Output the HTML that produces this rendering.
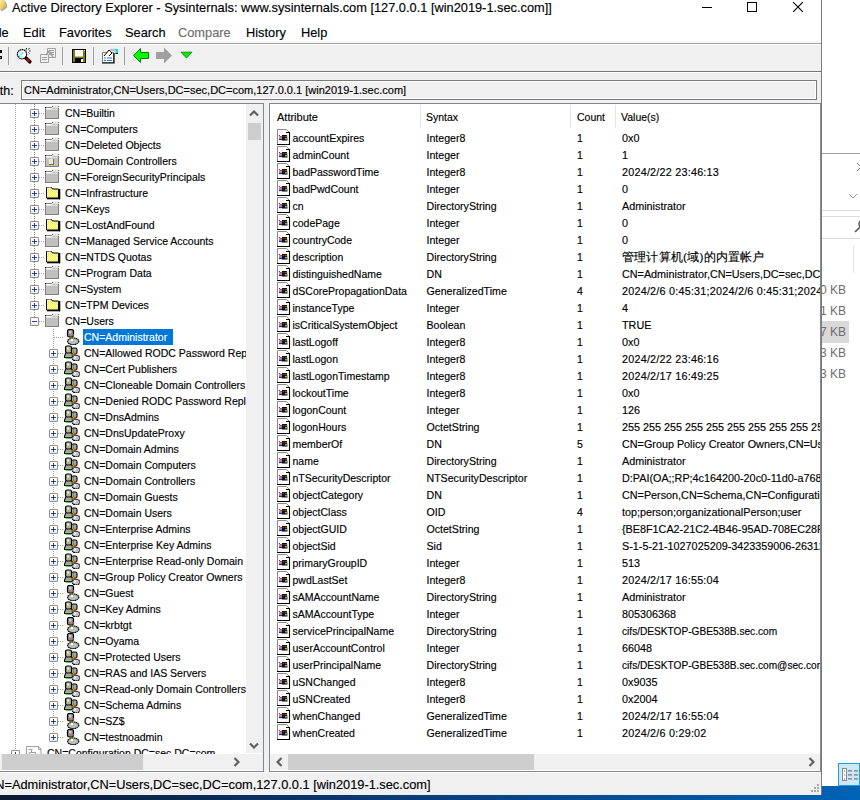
<!DOCTYPE html><html><head><meta charset="utf-8"><style>
*{box-sizing:border-box}
html,body{margin:0;padding:0}
body{width:860px;height:800px;overflow:hidden;position:relative;background:#fff;font-family:"Liberation Sans",sans-serif;color:#000}
.a{position:absolute}
.t{position:absolute;white-space:pre;font-size:11px;line-height:16px;-webkit-text-stroke-width:0.15px}
.s5{font-size:10.5px}
.s1{font-size:10.15px}
.s6{font-size:10.6px}
.s8{font-size:10.8px}
.dt{letter-spacing:0.22px}
.ic{position:absolute}
.eb{position:absolute;width:9px;height:9px;border:1px solid #8f8f8f;border-radius:1px;background:linear-gradient(#fff,#fff 50%,#e6e6e6)}
.ebh{position:absolute;left:1px;top:3px;width:5px;height:1px;background:#21449a}
.ebv{position:absolute;left:3px;top:1px;width:1px;height:5px;background:#21449a}
.dv{position:absolute;width:1px;background:repeating-linear-gradient(#a0a0a0 0 1px,transparent 1px 2px)}
.dh{position:absolute;height:1px;background:repeating-linear-gradient(90deg,#a0a0a0 0 1px,transparent 1px 2px)}
.sep{position:absolute;width:1px;background:#a0a0a0}
</style></head><body>
<div class="a" style="left:0;top:786px;width:860px;height:14px;background:linear-gradient(90deg,#0a1a34 0%,#0a3a78 45%,#0063b6 100%)"></div>
<div class="a" style="left:821px;top:0;width:39px;height:786px;background:#fff"></div>
<div class="a" style="left:821px;top:153px;width:39px;height:1px;background:#a0a0a0"></div>
<div class="a" style="left:821px;top:210px;width:39px;height:1px;background:#d9d9d9"></div>
<div class="a" style="left:821px;top:216px;width:39px;height:1px;background:#d9d9d9"></div>
<div class="a" style="left:821px;top:238px;width:39px;height:1px;background:#d9d9d9"></div>
<svg class="a" style="left:821px;top:150px" width="39" height="100" viewBox="0 0 39 100"><path d="M36 13 l4 4 M36 21 l4 -4" stroke="#777" stroke-width="1"/><path d="M28 44 l4 4 l4 -4" stroke="#999" fill="none" stroke-width="1"/><circle cx="42" cy="74" r="4" stroke="#555" fill="none" stroke-width="1.5"/><path d="M39 77 l-5 5" stroke="#555" stroke-width="1.6"/></svg>
<div class="a" style="left:853px;top:246px;width:1px;height:27px;background:#e5e5e5"></div>
<div class="a" style="left:821px;top:321px;width:28px;height:22px;background:#d9d9d9"></div>
<div class="t" style="left:820px;top:282px;font-size:12px;color:#6d6d6d;-webkit-text-stroke-width:0">0 KB</div>
<div class="t" style="left:820px;top:303px;font-size:12px;color:#6d6d6d;-webkit-text-stroke-width:0">1 KB</div>
<div class="t" style="left:820px;top:324px;font-size:12px;color:#6d6d6d;-webkit-text-stroke-width:0">7 KB</div>
<div class="t" style="left:820px;top:345px;font-size:12px;color:#6d6d6d;-webkit-text-stroke-width:0">3 KB</div>
<div class="t" style="left:820px;top:366px;font-size:12px;color:#6d6d6d;-webkit-text-stroke-width:0">3 KB</div>
<div class="a" style="left:838px;top:763px;width:22px;height:23px;background:#cce8f7;border:1.5px solid #1e9ee0"></div>
<svg class="a" style="left:838px;top:763px" width="22" height="23" viewBox="0 0 22 23"><rect x="4.5" y="5.5" width="4" height="12" fill="#fff" stroke="#888" stroke-width="1"/><rect x="6" y="7.5" width="1" height="1" fill="#486"/><rect x="6" y="11.5" width="1" height="1" fill="#48f"/><rect x="6" y="15.5" width="1" height="1" fill="#e22"/><path d="M10 7.8h4M16 7.8h4M10 11.8h4M16 11.8h4M10 15.8h4M16 15.8h4" stroke="#777" stroke-width="1.2"/></svg>
<div class="a" style="left:0;top:0;width:822px;height:795px;background:#f0f0f0;border-right:1px solid #7a7a7a"></div>
<div class="a" style="left:0;top:0;width:821px;height:43px;background:#fff"></div>
<div class="a" style="left:0;top:41px;width:821px;height:2px;background:#f7f7f7"></div>
<div class="a" style="left:0;top:43px;width:821px;height:1px;background:#a0a0a0"></div>
<div class="a" style="left:0;top:44px;width:821px;height:1px;background:#fff"></div>
<svg class="a" style="left:0;top:0" width="10" height="12" viewBox="0 0 10 12"><defs><linearGradient id="tg" x1="0" y1="0" x2="1" y2="1"><stop offset="0" stop-color="#fff2a8"/><stop offset="1" stop-color="#d9a62a"/></linearGradient></defs><path d="M0 10.5L3 9.5L6.5 6.5L6 3L4 0H0z" fill="#555" opacity="0.5" transform="translate(0.8,0.8)"/><path d="M0 10L2.5 9L6 6L5.5 3L3.5 0H0z" fill="url(#tg)"/></svg>
<div class="t" style="left:12px;top:-1px;font-size:12.8px;line-height:18px">Active Directory Explorer - Sysinternals: www.sysinternals.com [127.0.0.1 [win2019-1.sec.com]]</div>
<div class="a" style="left:702px;top:7px;width:10px;height:1px;background:#000"></div>
<div class="a" style="left:747px;top:2px;width:10px;height:10px;border:1px solid #000"></div>
<svg class="a" style="left:793px;top:2px" width="10" height="10" viewBox="0 0 10 10"><path d="M0 0L10 10M10 0L0 10" stroke="#000" stroke-width="1.1"/></svg>
<div class="t" style="left:-12px;top:24px;font-size:12.8px;line-height:18px;color:#000">File</div>
<div class="t" style="left:23px;top:24px;font-size:12.8px;line-height:18px;color:#000">Edit</div>
<div class="t" style="left:59px;top:24px;font-size:12.8px;line-height:18px;color:#000">Favorites</div>
<div class="t" style="left:125px;top:24px;font-size:12.8px;line-height:18px;color:#000">Search</div>
<div class="t" style="left:178px;top:24px;font-size:12.8px;line-height:18px;color:#6d6d6d">Compare</div>
<div class="t" style="left:246px;top:24px;font-size:12.8px;line-height:18px;color:#000">History</div>
<div class="t" style="left:301px;top:24px;font-size:12.8px;line-height:18px;color:#000">Help</div>
<div class="a" style="left:0;top:71px;width:821px;height:1px;background:#767676"></div>
<div class="a" style="left:0;top:72px;width:821px;height:1px;background:#fff"></div>
<div class="sep" style="left:8px;top:47px;height:18px"></div>
<div class="sep" style="left:62px;top:47px;height:18px"></div>
<div class="sep" style="left:93px;top:47px;height:18px"></div>
<div class="sep" style="left:124px;top:47px;height:18px"></div>
<div class="a" style="left:0;top:50px;width:2px;height:3px;background:#000"></div><div class="a" style="left:0;top:56px;width:2px;height:3px;background:#000"></div><div class="a" style="left:0;top:57px;width:1px;height:1px;background:#aa0"></div>
<svg class="a" style="left:0;top:44px" width="200" height="24" viewBox="0 44 200 24"><circle cx="22" cy="54.2" r="4.6" fill="#fff" stroke="#000" stroke-width="1.2" stroke-dasharray="1.6 0.5"/><path d="M19 56.5l1-1M20.5 55l1-1M22 53.5l1-1M19.5 53l1 0M21 57l1 0" stroke="#00e0ff" stroke-width="1.2"/><path d="M26.2 58.2l3.6 3.6" stroke="#000" stroke-width="3.6" stroke-linecap="round"/><path d="M26.6 58.6l3 3" stroke="#e00000" stroke-width="2"/><path d="M26.5 48v1.5M29.5 48l-1 1.5M30.5 51h-1.5M29.5 53.5l-1-1M25 49.5l1 1" stroke="#000" stroke-width="0.9"/><path d="M47.5 48.5h8v9h-8z" fill="#f0f0f0" stroke="#a0a0a0"/><path d="M49 50.5h5M49 52.5h5M49 54.5h5" stroke="#a0a0a0"/><path d="M40.5 54.5h8v8h-8z" fill="#f0f0f0" stroke="#a0a0a0"/><path d="M42 57.5h5M42 59.5h5" stroke="#a0a0a0"/><path d="M46 55l3-4l3 3M49 52l4 5" stroke="#a0a0a0" stroke-width="1.4" fill="none"/><rect x="72" y="49" width="14" height="14" fill="#000"/><rect x="73" y="50" width="12" height="12" fill="#808000"/><rect x="75" y="50" width="8" height="6.5" fill="#fff"/><rect x="75" y="58" width="8" height="4" fill="#000"/><rect x="81" y="59" width="2" height="3" fill="#fff"/><rect x="84" y="50" width="1" height="1" fill="#fff"/><path d="M102.5 52.5h11v10h-11z" fill="#fff" stroke="#808080"/><path d="M114 53v10h-12" stroke="#000" fill="none" stroke-width="1.2"/><path d="M104 58h2M107 58h5M104 60.5h2M107 60.5h5" stroke="#1e6fe0" stroke-width="1.2"/><path d="M104 56l5-6l3 3l-3 3" stroke="#000" fill="#fffde0" stroke-width="1"/><path d="M110 50h6" stroke="#c0c0c0" stroke-width="2.5"/><rect x="115.5" y="49" width="2.5" height="5" fill="#00e0ff"/><rect x="115.5" y="53" width="2.5" height="1" fill="#000"/><path d="M133.5 55.5L140.5 48.5V52.5H148.5V58.5H140.5V62.5z" fill="#00ff00" stroke="#008000" stroke-width="1"/><path d="M172 55.5L164 47.5V52H156V59H164V63.5z" fill="#a0a0a0"/><path d="M181 52.2H192L186.5 58z" fill="#00f000" stroke="#008000" stroke-width="0.8"/></svg>
<div class="t" style="left:-15.5px;top:82px;font-size:12.5px;line-height:18px">Path:</div>
<div class="a" style="left:21px;top:80px;width:796px;height:20px;border:1px solid #7a7a7a;background:#f0f0f0;box-shadow:inset 0 0 0 1px #fff"></div>
<div class="t" style="left:24px;top:82px;line-height:16px">CN=Administrator,CN=Users,DC=sec,DC=com,127.0.0.1 [win2019-1.sec.com]</div>
<div class="a" style="left:-2px;top:103px;width:266px;height:669px;border:1px solid #828790;background:#fff;overflow:hidden">
<div class="dv" style="left:16px;top:0px;height:660px"></div>
<div class="dv" style="left:35px;top:0px;height:217px"></div>
<div class="dv" style="left:54px;top:225px;height:408px"></div>
<div class="eb" style="left:31px;top:5px"><div class="ebh"></div><div class="ebv"></div></div>
<div class="dh" style="left:40px;top:9px;width:6px"></div>
<svg class="ic" style="left:46px;top:1px" width="16" height="16" viewBox="0 0 16 16"><rect x="0.5" y="2.5" width="13" height="11" fill="#c0c0c0" stroke="#808080"/><rect x="1" y="3" width="6" height="1" fill="#fff"/><rect x="1" y="4" width="12" height="1" fill="#e0e0e0"/><rect x="7" y="0.5" width="7" height="2.5" fill="#e8e8e8"/><rect x="7" y="1" width="1" height="1" fill="#808000"/><rect x="13" y="1" width="1" height="1" fill="#808000"/><rect x="0" y="2" width="1" height="1" fill="#000"/></svg>
<div class="t s5" style="left:66px;top:1px">CN=Builtin</div>
<div class="eb" style="left:31px;top:21px"><div class="ebh"></div><div class="ebv"></div></div>
<div class="dh" style="left:40px;top:25px;width:6px"></div>
<svg class="ic" style="left:46px;top:17px" width="16" height="16" viewBox="0 0 16 16"><rect x="0.5" y="2.5" width="13" height="11" fill="#c0c0c0" stroke="#808080"/><rect x="1" y="3" width="6" height="1" fill="#fff"/><rect x="1" y="4" width="12" height="1" fill="#e0e0e0"/><rect x="7" y="0.5" width="7" height="2.5" fill="#e8e8e8"/><rect x="7" y="1" width="1" height="1" fill="#808000"/><rect x="13" y="1" width="1" height="1" fill="#808000"/><rect x="0" y="2" width="1" height="1" fill="#000"/></svg>
<div class="t s5" style="left:66px;top:17px">CN=Computers</div>
<div class="eb" style="left:31px;top:37px"><div class="ebh"></div><div class="ebv"></div></div>
<div class="dh" style="left:40px;top:41px;width:6px"></div>
<svg class="ic" style="left:46px;top:33px" width="16" height="16" viewBox="0 0 16 16"><rect x="0.5" y="2.5" width="13" height="11" fill="#c0c0c0" stroke="#808080"/><rect x="1" y="3" width="6" height="1" fill="#fff"/><rect x="1" y="4" width="12" height="1" fill="#e0e0e0"/><rect x="7" y="0.5" width="7" height="2.5" fill="#e8e8e8"/><rect x="7" y="1" width="1" height="1" fill="#808000"/><rect x="13" y="1" width="1" height="1" fill="#808000"/><rect x="0" y="2" width="1" height="1" fill="#000"/></svg>
<div class="t s5" style="left:66px;top:33px">CN=Deleted Objects</div>
<div class="eb" style="left:31px;top:53px"><div class="ebh"></div><div class="ebv"></div></div>
<div class="dh" style="left:40px;top:57px;width:6px"></div>
<svg class="ic" style="left:46px;top:49px" width="16" height="16" viewBox="0 0 16 16"><rect x="0.5" y="2.5" width="13" height="11" fill="#c0c0c0" stroke="#808080"/><rect x="1" y="3" width="6" height="1" fill="#fff"/><rect x="1" y="4" width="12" height="1" fill="#e0e0e0"/><rect x="7" y="0.5" width="7" height="2.5" fill="#e8e8e8"/><rect x="7" y="1" width="1" height="1" fill="#808000"/><rect x="13" y="1" width="1" height="1" fill="#808000"/><rect x="0" y="2" width="1" height="1" fill="#000"/><path d="M4 6h5v5h-5z" fill="#e8e8e8"/><path d="M9 6v6h-5v-1h4v-5z" fill="#808000"/></svg>
<div class="t s5" style="left:66px;top:49px">OU=Domain Controllers</div>
<div class="eb" style="left:31px;top:69px"><div class="ebh"></div><div class="ebv"></div></div>
<div class="dh" style="left:40px;top:73px;width:6px"></div>
<svg class="ic" style="left:46px;top:65px" width="16" height="16" viewBox="0 0 16 16"><rect x="0.5" y="2.5" width="13" height="11" fill="#c0c0c0" stroke="#808080"/><rect x="1" y="3" width="6" height="1" fill="#fff"/><rect x="1" y="4" width="12" height="1" fill="#e0e0e0"/><rect x="7" y="0.5" width="7" height="2.5" fill="#e8e8e8"/><rect x="7" y="1" width="1" height="1" fill="#808000"/><rect x="13" y="1" width="1" height="1" fill="#808000"/><rect x="0" y="2" width="1" height="1" fill="#000"/></svg>
<div class="t s5" style="left:66px;top:65px">CN=ForeignSecurityPrincipals</div>
<div class="eb" style="left:31px;top:85px"><div class="ebh"></div><div class="ebv"></div></div>
<div class="dh" style="left:40px;top:89px;width:6px"></div>
<svg class="ic" style="left:46px;top:81px" width="16" height="16" viewBox="0 0 16 16"><defs><pattern id="dy" width="2" height="2" patternUnits="userSpaceOnUse"><rect width="2" height="2" fill="#f4f400"/><rect width="1" height="1" fill="#fff"/><rect x="1" y="1" width="1" height="1" fill="#fff"/></pattern></defs><rect x="2" y="13" width="13" height="1.3" fill="#000"/><rect x="14" y="4" width="1.3" height="10.3" fill="#000"/><path d="M1.5 2.5h5l1 1.5h6v9h-12z" fill="url(#dy)" stroke="#000" stroke-width="1"/><path d="M2 3h4" stroke="#fff" stroke-width="1"/></svg>
<div class="t s5" style="left:66px;top:81px">CN=Infrastructure</div>
<div class="eb" style="left:31px;top:101px"><div class="ebh"></div><div class="ebv"></div></div>
<div class="dh" style="left:40px;top:105px;width:6px"></div>
<svg class="ic" style="left:46px;top:97px" width="16" height="16" viewBox="0 0 16 16"><rect x="0.5" y="2.5" width="13" height="11" fill="#c0c0c0" stroke="#808080"/><rect x="1" y="3" width="6" height="1" fill="#fff"/><rect x="1" y="4" width="12" height="1" fill="#e0e0e0"/><rect x="7" y="0.5" width="7" height="2.5" fill="#e8e8e8"/><rect x="7" y="1" width="1" height="1" fill="#808000"/><rect x="13" y="1" width="1" height="1" fill="#808000"/><rect x="0" y="2" width="1" height="1" fill="#000"/></svg>
<div class="t s5" style="left:66px;top:97px">CN=Keys</div>
<div class="eb" style="left:31px;top:117px"><div class="ebh"></div><div class="ebv"></div></div>
<div class="dh" style="left:40px;top:121px;width:6px"></div>
<svg class="ic" style="left:46px;top:113px" width="16" height="16" viewBox="0 0 16 16"><defs><pattern id="dy" width="2" height="2" patternUnits="userSpaceOnUse"><rect width="2" height="2" fill="#f4f400"/><rect width="1" height="1" fill="#fff"/><rect x="1" y="1" width="1" height="1" fill="#fff"/></pattern></defs><rect x="2" y="13" width="13" height="1.3" fill="#000"/><rect x="14" y="4" width="1.3" height="10.3" fill="#000"/><path d="M1.5 2.5h5l1 1.5h6v9h-12z" fill="url(#dy)" stroke="#000" stroke-width="1"/><path d="M2 3h4" stroke="#fff" stroke-width="1"/></svg>
<div class="t s5" style="left:66px;top:113px">CN=LostAndFound</div>
<div class="eb" style="left:31px;top:133px"><div class="ebh"></div><div class="ebv"></div></div>
<div class="dh" style="left:40px;top:137px;width:6px"></div>
<svg class="ic" style="left:46px;top:129px" width="16" height="16" viewBox="0 0 16 16"><rect x="0.5" y="2.5" width="13" height="11" fill="#c0c0c0" stroke="#808080"/><rect x="1" y="3" width="6" height="1" fill="#fff"/><rect x="1" y="4" width="12" height="1" fill="#e0e0e0"/><rect x="7" y="0.5" width="7" height="2.5" fill="#e8e8e8"/><rect x="7" y="1" width="1" height="1" fill="#808000"/><rect x="13" y="1" width="1" height="1" fill="#808000"/><rect x="0" y="2" width="1" height="1" fill="#000"/></svg>
<div class="t s5" style="left:66px;top:129px">CN=Managed Service Accounts</div>
<div class="eb" style="left:31px;top:149px"><div class="ebh"></div><div class="ebv"></div></div>
<div class="dh" style="left:40px;top:153px;width:6px"></div>
<svg class="ic" style="left:46px;top:145px" width="16" height="16" viewBox="0 0 16 16"><defs><pattern id="dy" width="2" height="2" patternUnits="userSpaceOnUse"><rect width="2" height="2" fill="#f4f400"/><rect width="1" height="1" fill="#fff"/><rect x="1" y="1" width="1" height="1" fill="#fff"/></pattern></defs><rect x="2" y="13" width="13" height="1.3" fill="#000"/><rect x="14" y="4" width="1.3" height="10.3" fill="#000"/><path d="M1.5 2.5h5l1 1.5h6v9h-12z" fill="url(#dy)" stroke="#000" stroke-width="1"/><path d="M2 3h4" stroke="#fff" stroke-width="1"/></svg>
<div class="t s5" style="left:66px;top:145px">CN=NTDS Quotas</div>
<div class="eb" style="left:31px;top:165px"><div class="ebh"></div><div class="ebv"></div></div>
<div class="dh" style="left:40px;top:169px;width:6px"></div>
<svg class="ic" style="left:46px;top:161px" width="16" height="16" viewBox="0 0 16 16"><rect x="0.5" y="2.5" width="13" height="11" fill="#c0c0c0" stroke="#808080"/><rect x="1" y="3" width="6" height="1" fill="#fff"/><rect x="1" y="4" width="12" height="1" fill="#e0e0e0"/><rect x="7" y="0.5" width="7" height="2.5" fill="#e8e8e8"/><rect x="7" y="1" width="1" height="1" fill="#808000"/><rect x="13" y="1" width="1" height="1" fill="#808000"/><rect x="0" y="2" width="1" height="1" fill="#000"/></svg>
<div class="t s5" style="left:66px;top:161px">CN=Program Data</div>
<div class="eb" style="left:31px;top:181px"><div class="ebh"></div><div class="ebv"></div></div>
<div class="dh" style="left:40px;top:185px;width:6px"></div>
<svg class="ic" style="left:46px;top:177px" width="16" height="16" viewBox="0 0 16 16"><rect x="0.5" y="2.5" width="13" height="11" fill="#c0c0c0" stroke="#808080"/><rect x="1" y="3" width="6" height="1" fill="#fff"/><rect x="1" y="4" width="12" height="1" fill="#e0e0e0"/><rect x="7" y="0.5" width="7" height="2.5" fill="#e8e8e8"/><rect x="7" y="1" width="1" height="1" fill="#808000"/><rect x="13" y="1" width="1" height="1" fill="#808000"/><rect x="0" y="2" width="1" height="1" fill="#000"/></svg>
<div class="t s5" style="left:66px;top:177px">CN=System</div>
<div class="eb" style="left:31px;top:197px"><div class="ebh"></div><div class="ebv"></div></div>
<div class="dh" style="left:40px;top:201px;width:6px"></div>
<svg class="ic" style="left:46px;top:193px" width="16" height="16" viewBox="0 0 16 16"><defs><pattern id="dy" width="2" height="2" patternUnits="userSpaceOnUse"><rect width="2" height="2" fill="#f4f400"/><rect width="1" height="1" fill="#fff"/><rect x="1" y="1" width="1" height="1" fill="#fff"/></pattern></defs><rect x="2" y="13" width="13" height="1.3" fill="#000"/><rect x="14" y="4" width="1.3" height="10.3" fill="#000"/><path d="M1.5 2.5h5l1 1.5h6v9h-12z" fill="url(#dy)" stroke="#000" stroke-width="1"/><path d="M2 3h4" stroke="#fff" stroke-width="1"/></svg>
<div class="t s5" style="left:66px;top:193px">CN=TPM Devices</div>
<div class="eb" style="left:31px;top:213px"><div class="ebh"></div></div>
<div class="dh" style="left:40px;top:217px;width:6px"></div>
<svg class="ic" style="left:46px;top:209px" width="16" height="16" viewBox="0 0 16 16"><rect x="0.5" y="2.5" width="13" height="11" fill="#c0c0c0" stroke="#808080"/><rect x="1" y="3" width="6" height="1" fill="#fff"/><rect x="1" y="4" width="12" height="1" fill="#e0e0e0"/><rect x="7" y="0.5" width="7" height="2.5" fill="#e8e8e8"/><rect x="7" y="1" width="1" height="1" fill="#808000"/><rect x="13" y="1" width="1" height="1" fill="#808000"/><rect x="0" y="2" width="1" height="1" fill="#000"/></svg>
<div class="t s5" style="left:66px;top:209px">CN=Users</div>
<div class="dh" style="left:55px;top:233px;width:10px"></div>
<svg class="ic" style="left:65px;top:225px" width="16" height="16" viewBox="0 0 16 16"><ellipse cx="9.2" cy="12.3" rx="5.6" ry="3.3" fill="#c0c0c0" stroke="#000" stroke-width="1.2" stroke-dasharray="1.6 0.5"/><rect x="7" y="10" width="2" height="2" fill="#fff"/><path d="M13 14.5l1.5-1.5" stroke="#20a0c0" stroke-width="1"/><rect x="3.5" y="0.5" width="6" height="7.5" rx="1.8" fill="#8c8c8c" stroke="#000" stroke-width="1.2"/><rect x="5" y="2" width="2.5" height="2.5" fill="#c8c8c8"/><rect x="5" y="8" width="3" height="1.8" fill="#808000"/><rect x="9" y="5" width="1" height="2" fill="#c02020"/></svg>
<div class="a" style="left:84px;top:225px;width:90px;height:16px;background:#0078d7"></div>
<div class="t s5" style="left:85px;top:225px;color:#fff">CN=Administrator</div>
<div class="eb" style="left:50px;top:245px"><div class="ebh"></div><div class="ebv"></div></div>
<div class="dh" style="left:59px;top:249px;width:6px"></div>
<svg class="ic" style="left:65px;top:241px" width="16" height="16" viewBox="0 0 16 16"><path d="M0 12.5 L2 7.5 h6 l1 5z" fill="#a8a8a8" stroke="#000" stroke-width="1.1"/><rect x="1.5" y="1" width="6" height="7" rx="1.6" fill="#b0b0b0" stroke="#000" stroke-width="1.1"/><rect x="3" y="2.5" width="2" height="2" fill="#e8e8e8"/><rect x="2" y="2" width="1" height="5" fill="#909000"/><rect x="7.5" y="3" width="5.5" height="6" rx="1.5" fill="#a8a8a8" stroke="#000" stroke-width="1.1"/><rect x="9" y="4" width="1" height="5" fill="#909000"/><rect x="2" y="12.5" width="5" height="1.2" fill="#00a000"/><path d="M7 11 l3-2.5 l2 0" stroke="#909000" stroke-width="1.3" fill="none"/><path d="M10.5 9.5 l2-1.5" stroke="#d00000" stroke-width="1"/><ellipse cx="12" cy="13" rx="4" ry="2.8" fill="#c4c4c4" stroke="#000" stroke-width="1.1" stroke-dasharray="1.5 0.5"/><rect x="10" y="11.5" width="2" height="2" fill="#f4f4f4"/><path d="M8.5 14.5l1.5 1.3" stroke="#0000c0" stroke-width="1"/></svg>
<div class="t s5" style="left:85px;top:241px">CN=Allowed RODC Password Replication Group</div>
<div class="eb" style="left:50px;top:261px"><div class="ebh"></div><div class="ebv"></div></div>
<div class="dh" style="left:59px;top:265px;width:6px"></div>
<svg class="ic" style="left:65px;top:257px" width="16" height="16" viewBox="0 0 16 16"><path d="M0 12.5 L2 7.5 h6 l1 5z" fill="#a8a8a8" stroke="#000" stroke-width="1.1"/><rect x="1.5" y="1" width="6" height="7" rx="1.6" fill="#b0b0b0" stroke="#000" stroke-width="1.1"/><rect x="3" y="2.5" width="2" height="2" fill="#e8e8e8"/><rect x="2" y="2" width="1" height="5" fill="#909000"/><rect x="7.5" y="3" width="5.5" height="6" rx="1.5" fill="#a8a8a8" stroke="#000" stroke-width="1.1"/><rect x="9" y="4" width="1" height="5" fill="#909000"/><rect x="2" y="12.5" width="5" height="1.2" fill="#00a000"/><path d="M7 11 l3-2.5 l2 0" stroke="#909000" stroke-width="1.3" fill="none"/><path d="M10.5 9.5 l2-1.5" stroke="#d00000" stroke-width="1"/><ellipse cx="12" cy="13" rx="4" ry="2.8" fill="#c4c4c4" stroke="#000" stroke-width="1.1" stroke-dasharray="1.5 0.5"/><rect x="10" y="11.5" width="2" height="2" fill="#f4f4f4"/><path d="M8.5 14.5l1.5 1.3" stroke="#0000c0" stroke-width="1"/></svg>
<div class="t s5" style="left:85px;top:257px">CN=Cert Publishers</div>
<div class="eb" style="left:50px;top:277px"><div class="ebh"></div><div class="ebv"></div></div>
<div class="dh" style="left:59px;top:281px;width:6px"></div>
<svg class="ic" style="left:65px;top:273px" width="16" height="16" viewBox="0 0 16 16"><path d="M0 12.5 L2 7.5 h6 l1 5z" fill="#a8a8a8" stroke="#000" stroke-width="1.1"/><rect x="1.5" y="1" width="6" height="7" rx="1.6" fill="#b0b0b0" stroke="#000" stroke-width="1.1"/><rect x="3" y="2.5" width="2" height="2" fill="#e8e8e8"/><rect x="2" y="2" width="1" height="5" fill="#909000"/><rect x="7.5" y="3" width="5.5" height="6" rx="1.5" fill="#a8a8a8" stroke="#000" stroke-width="1.1"/><rect x="9" y="4" width="1" height="5" fill="#909000"/><rect x="2" y="12.5" width="5" height="1.2" fill="#00a000"/><path d="M7 11 l3-2.5 l2 0" stroke="#909000" stroke-width="1.3" fill="none"/><path d="M10.5 9.5 l2-1.5" stroke="#d00000" stroke-width="1"/><ellipse cx="12" cy="13" rx="4" ry="2.8" fill="#c4c4c4" stroke="#000" stroke-width="1.1" stroke-dasharray="1.5 0.5"/><rect x="10" y="11.5" width="2" height="2" fill="#f4f4f4"/><path d="M8.5 14.5l1.5 1.3" stroke="#0000c0" stroke-width="1"/></svg>
<div class="t s5" style="left:85px;top:273px">CN=Cloneable Domain Controllers</div>
<div class="eb" style="left:50px;top:293px"><div class="ebh"></div><div class="ebv"></div></div>
<div class="dh" style="left:59px;top:297px;width:6px"></div>
<svg class="ic" style="left:65px;top:289px" width="16" height="16" viewBox="0 0 16 16"><path d="M0 12.5 L2 7.5 h6 l1 5z" fill="#a8a8a8" stroke="#000" stroke-width="1.1"/><rect x="1.5" y="1" width="6" height="7" rx="1.6" fill="#b0b0b0" stroke="#000" stroke-width="1.1"/><rect x="3" y="2.5" width="2" height="2" fill="#e8e8e8"/><rect x="2" y="2" width="1" height="5" fill="#909000"/><rect x="7.5" y="3" width="5.5" height="6" rx="1.5" fill="#a8a8a8" stroke="#000" stroke-width="1.1"/><rect x="9" y="4" width="1" height="5" fill="#909000"/><rect x="2" y="12.5" width="5" height="1.2" fill="#00a000"/><path d="M7 11 l3-2.5 l2 0" stroke="#909000" stroke-width="1.3" fill="none"/><path d="M10.5 9.5 l2-1.5" stroke="#d00000" stroke-width="1"/><ellipse cx="12" cy="13" rx="4" ry="2.8" fill="#c4c4c4" stroke="#000" stroke-width="1.1" stroke-dasharray="1.5 0.5"/><rect x="10" y="11.5" width="2" height="2" fill="#f4f4f4"/><path d="M8.5 14.5l1.5 1.3" stroke="#0000c0" stroke-width="1"/></svg>
<div class="t s5" style="left:85px;top:289px">CN=Denied RODC Password Replication Group</div>
<div class="eb" style="left:50px;top:309px"><div class="ebh"></div><div class="ebv"></div></div>
<div class="dh" style="left:59px;top:313px;width:6px"></div>
<svg class="ic" style="left:65px;top:305px" width="16" height="16" viewBox="0 0 16 16"><path d="M0 12.5 L2 7.5 h6 l1 5z" fill="#a8a8a8" stroke="#000" stroke-width="1.1"/><rect x="1.5" y="1" width="6" height="7" rx="1.6" fill="#b0b0b0" stroke="#000" stroke-width="1.1"/><rect x="3" y="2.5" width="2" height="2" fill="#e8e8e8"/><rect x="2" y="2" width="1" height="5" fill="#909000"/><rect x="7.5" y="3" width="5.5" height="6" rx="1.5" fill="#a8a8a8" stroke="#000" stroke-width="1.1"/><rect x="9" y="4" width="1" height="5" fill="#909000"/><rect x="2" y="12.5" width="5" height="1.2" fill="#00a000"/><path d="M7 11 l3-2.5 l2 0" stroke="#909000" stroke-width="1.3" fill="none"/><path d="M10.5 9.5 l2-1.5" stroke="#d00000" stroke-width="1"/><ellipse cx="12" cy="13" rx="4" ry="2.8" fill="#c4c4c4" stroke="#000" stroke-width="1.1" stroke-dasharray="1.5 0.5"/><rect x="10" y="11.5" width="2" height="2" fill="#f4f4f4"/><path d="M8.5 14.5l1.5 1.3" stroke="#0000c0" stroke-width="1"/></svg>
<div class="t s5" style="left:85px;top:305px">CN=DnsAdmins</div>
<div class="eb" style="left:50px;top:325px"><div class="ebh"></div><div class="ebv"></div></div>
<div class="dh" style="left:59px;top:329px;width:6px"></div>
<svg class="ic" style="left:65px;top:321px" width="16" height="16" viewBox="0 0 16 16"><path d="M0 12.5 L2 7.5 h6 l1 5z" fill="#a8a8a8" stroke="#000" stroke-width="1.1"/><rect x="1.5" y="1" width="6" height="7" rx="1.6" fill="#b0b0b0" stroke="#000" stroke-width="1.1"/><rect x="3" y="2.5" width="2" height="2" fill="#e8e8e8"/><rect x="2" y="2" width="1" height="5" fill="#909000"/><rect x="7.5" y="3" width="5.5" height="6" rx="1.5" fill="#a8a8a8" stroke="#000" stroke-width="1.1"/><rect x="9" y="4" width="1" height="5" fill="#909000"/><rect x="2" y="12.5" width="5" height="1.2" fill="#00a000"/><path d="M7 11 l3-2.5 l2 0" stroke="#909000" stroke-width="1.3" fill="none"/><path d="M10.5 9.5 l2-1.5" stroke="#d00000" stroke-width="1"/><ellipse cx="12" cy="13" rx="4" ry="2.8" fill="#c4c4c4" stroke="#000" stroke-width="1.1" stroke-dasharray="1.5 0.5"/><rect x="10" y="11.5" width="2" height="2" fill="#f4f4f4"/><path d="M8.5 14.5l1.5 1.3" stroke="#0000c0" stroke-width="1"/></svg>
<div class="t s5" style="left:85px;top:321px">CN=DnsUpdateProxy</div>
<div class="eb" style="left:50px;top:341px"><div class="ebh"></div><div class="ebv"></div></div>
<div class="dh" style="left:59px;top:345px;width:6px"></div>
<svg class="ic" style="left:65px;top:337px" width="16" height="16" viewBox="0 0 16 16"><path d="M0 12.5 L2 7.5 h6 l1 5z" fill="#a8a8a8" stroke="#000" stroke-width="1.1"/><rect x="1.5" y="1" width="6" height="7" rx="1.6" fill="#b0b0b0" stroke="#000" stroke-width="1.1"/><rect x="3" y="2.5" width="2" height="2" fill="#e8e8e8"/><rect x="2" y="2" width="1" height="5" fill="#909000"/><rect x="7.5" y="3" width="5.5" height="6" rx="1.5" fill="#a8a8a8" stroke="#000" stroke-width="1.1"/><rect x="9" y="4" width="1" height="5" fill="#909000"/><rect x="2" y="12.5" width="5" height="1.2" fill="#00a000"/><path d="M7 11 l3-2.5 l2 0" stroke="#909000" stroke-width="1.3" fill="none"/><path d="M10.5 9.5 l2-1.5" stroke="#d00000" stroke-width="1"/><ellipse cx="12" cy="13" rx="4" ry="2.8" fill="#c4c4c4" stroke="#000" stroke-width="1.1" stroke-dasharray="1.5 0.5"/><rect x="10" y="11.5" width="2" height="2" fill="#f4f4f4"/><path d="M8.5 14.5l1.5 1.3" stroke="#0000c0" stroke-width="1"/></svg>
<div class="t s5" style="left:85px;top:337px">CN=Domain Admins</div>
<div class="eb" style="left:50px;top:357px"><div class="ebh"></div><div class="ebv"></div></div>
<div class="dh" style="left:59px;top:361px;width:6px"></div>
<svg class="ic" style="left:65px;top:353px" width="16" height="16" viewBox="0 0 16 16"><path d="M0 12.5 L2 7.5 h6 l1 5z" fill="#a8a8a8" stroke="#000" stroke-width="1.1"/><rect x="1.5" y="1" width="6" height="7" rx="1.6" fill="#b0b0b0" stroke="#000" stroke-width="1.1"/><rect x="3" y="2.5" width="2" height="2" fill="#e8e8e8"/><rect x="2" y="2" width="1" height="5" fill="#909000"/><rect x="7.5" y="3" width="5.5" height="6" rx="1.5" fill="#a8a8a8" stroke="#000" stroke-width="1.1"/><rect x="9" y="4" width="1" height="5" fill="#909000"/><rect x="2" y="12.5" width="5" height="1.2" fill="#00a000"/><path d="M7 11 l3-2.5 l2 0" stroke="#909000" stroke-width="1.3" fill="none"/><path d="M10.5 9.5 l2-1.5" stroke="#d00000" stroke-width="1"/><ellipse cx="12" cy="13" rx="4" ry="2.8" fill="#c4c4c4" stroke="#000" stroke-width="1.1" stroke-dasharray="1.5 0.5"/><rect x="10" y="11.5" width="2" height="2" fill="#f4f4f4"/><path d="M8.5 14.5l1.5 1.3" stroke="#0000c0" stroke-width="1"/></svg>
<div class="t s5" style="left:85px;top:353px">CN=Domain Computers</div>
<div class="eb" style="left:50px;top:373px"><div class="ebh"></div><div class="ebv"></div></div>
<div class="dh" style="left:59px;top:377px;width:6px"></div>
<svg class="ic" style="left:65px;top:369px" width="16" height="16" viewBox="0 0 16 16"><path d="M0 12.5 L2 7.5 h6 l1 5z" fill="#a8a8a8" stroke="#000" stroke-width="1.1"/><rect x="1.5" y="1" width="6" height="7" rx="1.6" fill="#b0b0b0" stroke="#000" stroke-width="1.1"/><rect x="3" y="2.5" width="2" height="2" fill="#e8e8e8"/><rect x="2" y="2" width="1" height="5" fill="#909000"/><rect x="7.5" y="3" width="5.5" height="6" rx="1.5" fill="#a8a8a8" stroke="#000" stroke-width="1.1"/><rect x="9" y="4" width="1" height="5" fill="#909000"/><rect x="2" y="12.5" width="5" height="1.2" fill="#00a000"/><path d="M7 11 l3-2.5 l2 0" stroke="#909000" stroke-width="1.3" fill="none"/><path d="M10.5 9.5 l2-1.5" stroke="#d00000" stroke-width="1"/><ellipse cx="12" cy="13" rx="4" ry="2.8" fill="#c4c4c4" stroke="#000" stroke-width="1.1" stroke-dasharray="1.5 0.5"/><rect x="10" y="11.5" width="2" height="2" fill="#f4f4f4"/><path d="M8.5 14.5l1.5 1.3" stroke="#0000c0" stroke-width="1"/></svg>
<div class="t s5" style="left:85px;top:369px">CN=Domain Controllers</div>
<div class="eb" style="left:50px;top:389px"><div class="ebh"></div><div class="ebv"></div></div>
<div class="dh" style="left:59px;top:393px;width:6px"></div>
<svg class="ic" style="left:65px;top:385px" width="16" height="16" viewBox="0 0 16 16"><path d="M0 12.5 L2 7.5 h6 l1 5z" fill="#a8a8a8" stroke="#000" stroke-width="1.1"/><rect x="1.5" y="1" width="6" height="7" rx="1.6" fill="#b0b0b0" stroke="#000" stroke-width="1.1"/><rect x="3" y="2.5" width="2" height="2" fill="#e8e8e8"/><rect x="2" y="2" width="1" height="5" fill="#909000"/><rect x="7.5" y="3" width="5.5" height="6" rx="1.5" fill="#a8a8a8" stroke="#000" stroke-width="1.1"/><rect x="9" y="4" width="1" height="5" fill="#909000"/><rect x="2" y="12.5" width="5" height="1.2" fill="#00a000"/><path d="M7 11 l3-2.5 l2 0" stroke="#909000" stroke-width="1.3" fill="none"/><path d="M10.5 9.5 l2-1.5" stroke="#d00000" stroke-width="1"/><ellipse cx="12" cy="13" rx="4" ry="2.8" fill="#c4c4c4" stroke="#000" stroke-width="1.1" stroke-dasharray="1.5 0.5"/><rect x="10" y="11.5" width="2" height="2" fill="#f4f4f4"/><path d="M8.5 14.5l1.5 1.3" stroke="#0000c0" stroke-width="1"/></svg>
<div class="t s5" style="left:85px;top:385px">CN=Domain Guests</div>
<div class="eb" style="left:50px;top:405px"><div class="ebh"></div><div class="ebv"></div></div>
<div class="dh" style="left:59px;top:409px;width:6px"></div>
<svg class="ic" style="left:65px;top:401px" width="16" height="16" viewBox="0 0 16 16"><path d="M0 12.5 L2 7.5 h6 l1 5z" fill="#a8a8a8" stroke="#000" stroke-width="1.1"/><rect x="1.5" y="1" width="6" height="7" rx="1.6" fill="#b0b0b0" stroke="#000" stroke-width="1.1"/><rect x="3" y="2.5" width="2" height="2" fill="#e8e8e8"/><rect x="2" y="2" width="1" height="5" fill="#909000"/><rect x="7.5" y="3" width="5.5" height="6" rx="1.5" fill="#a8a8a8" stroke="#000" stroke-width="1.1"/><rect x="9" y="4" width="1" height="5" fill="#909000"/><rect x="2" y="12.5" width="5" height="1.2" fill="#00a000"/><path d="M7 11 l3-2.5 l2 0" stroke="#909000" stroke-width="1.3" fill="none"/><path d="M10.5 9.5 l2-1.5" stroke="#d00000" stroke-width="1"/><ellipse cx="12" cy="13" rx="4" ry="2.8" fill="#c4c4c4" stroke="#000" stroke-width="1.1" stroke-dasharray="1.5 0.5"/><rect x="10" y="11.5" width="2" height="2" fill="#f4f4f4"/><path d="M8.5 14.5l1.5 1.3" stroke="#0000c0" stroke-width="1"/></svg>
<div class="t s5" style="left:85px;top:401px">CN=Domain Users</div>
<div class="eb" style="left:50px;top:421px"><div class="ebh"></div><div class="ebv"></div></div>
<div class="dh" style="left:59px;top:425px;width:6px"></div>
<svg class="ic" style="left:65px;top:417px" width="16" height="16" viewBox="0 0 16 16"><path d="M0 12.5 L2 7.5 h6 l1 5z" fill="#a8a8a8" stroke="#000" stroke-width="1.1"/><rect x="1.5" y="1" width="6" height="7" rx="1.6" fill="#b0b0b0" stroke="#000" stroke-width="1.1"/><rect x="3" y="2.5" width="2" height="2" fill="#e8e8e8"/><rect x="2" y="2" width="1" height="5" fill="#909000"/><rect x="7.5" y="3" width="5.5" height="6" rx="1.5" fill="#a8a8a8" stroke="#000" stroke-width="1.1"/><rect x="9" y="4" width="1" height="5" fill="#909000"/><rect x="2" y="12.5" width="5" height="1.2" fill="#00a000"/><path d="M7 11 l3-2.5 l2 0" stroke="#909000" stroke-width="1.3" fill="none"/><path d="M10.5 9.5 l2-1.5" stroke="#d00000" stroke-width="1"/><ellipse cx="12" cy="13" rx="4" ry="2.8" fill="#c4c4c4" stroke="#000" stroke-width="1.1" stroke-dasharray="1.5 0.5"/><rect x="10" y="11.5" width="2" height="2" fill="#f4f4f4"/><path d="M8.5 14.5l1.5 1.3" stroke="#0000c0" stroke-width="1"/></svg>
<div class="t s5" style="left:85px;top:417px">CN=Enterprise Admins</div>
<div class="eb" style="left:50px;top:437px"><div class="ebh"></div><div class="ebv"></div></div>
<div class="dh" style="left:59px;top:441px;width:6px"></div>
<svg class="ic" style="left:65px;top:433px" width="16" height="16" viewBox="0 0 16 16"><path d="M0 12.5 L2 7.5 h6 l1 5z" fill="#a8a8a8" stroke="#000" stroke-width="1.1"/><rect x="1.5" y="1" width="6" height="7" rx="1.6" fill="#b0b0b0" stroke="#000" stroke-width="1.1"/><rect x="3" y="2.5" width="2" height="2" fill="#e8e8e8"/><rect x="2" y="2" width="1" height="5" fill="#909000"/><rect x="7.5" y="3" width="5.5" height="6" rx="1.5" fill="#a8a8a8" stroke="#000" stroke-width="1.1"/><rect x="9" y="4" width="1" height="5" fill="#909000"/><rect x="2" y="12.5" width="5" height="1.2" fill="#00a000"/><path d="M7 11 l3-2.5 l2 0" stroke="#909000" stroke-width="1.3" fill="none"/><path d="M10.5 9.5 l2-1.5" stroke="#d00000" stroke-width="1"/><ellipse cx="12" cy="13" rx="4" ry="2.8" fill="#c4c4c4" stroke="#000" stroke-width="1.1" stroke-dasharray="1.5 0.5"/><rect x="10" y="11.5" width="2" height="2" fill="#f4f4f4"/><path d="M8.5 14.5l1.5 1.3" stroke="#0000c0" stroke-width="1"/></svg>
<div class="t s5" style="left:85px;top:433px">CN=Enterprise Key Admins</div>
<div class="eb" style="left:50px;top:453px"><div class="ebh"></div><div class="ebv"></div></div>
<div class="dh" style="left:59px;top:457px;width:6px"></div>
<svg class="ic" style="left:65px;top:449px" width="16" height="16" viewBox="0 0 16 16"><path d="M0 12.5 L2 7.5 h6 l1 5z" fill="#a8a8a8" stroke="#000" stroke-width="1.1"/><rect x="1.5" y="1" width="6" height="7" rx="1.6" fill="#b0b0b0" stroke="#000" stroke-width="1.1"/><rect x="3" y="2.5" width="2" height="2" fill="#e8e8e8"/><rect x="2" y="2" width="1" height="5" fill="#909000"/><rect x="7.5" y="3" width="5.5" height="6" rx="1.5" fill="#a8a8a8" stroke="#000" stroke-width="1.1"/><rect x="9" y="4" width="1" height="5" fill="#909000"/><rect x="2" y="12.5" width="5" height="1.2" fill="#00a000"/><path d="M7 11 l3-2.5 l2 0" stroke="#909000" stroke-width="1.3" fill="none"/><path d="M10.5 9.5 l2-1.5" stroke="#d00000" stroke-width="1"/><ellipse cx="12" cy="13" rx="4" ry="2.8" fill="#c4c4c4" stroke="#000" stroke-width="1.1" stroke-dasharray="1.5 0.5"/><rect x="10" y="11.5" width="2" height="2" fill="#f4f4f4"/><path d="M8.5 14.5l1.5 1.3" stroke="#0000c0" stroke-width="1"/></svg>
<div class="t s5" style="left:85px;top:449px">CN=Enterprise Read-only Domain Controllers</div>
<div class="eb" style="left:50px;top:469px"><div class="ebh"></div><div class="ebv"></div></div>
<div class="dh" style="left:59px;top:473px;width:6px"></div>
<svg class="ic" style="left:65px;top:465px" width="16" height="16" viewBox="0 0 16 16"><path d="M0 12.5 L2 7.5 h6 l1 5z" fill="#a8a8a8" stroke="#000" stroke-width="1.1"/><rect x="1.5" y="1" width="6" height="7" rx="1.6" fill="#b0b0b0" stroke="#000" stroke-width="1.1"/><rect x="3" y="2.5" width="2" height="2" fill="#e8e8e8"/><rect x="2" y="2" width="1" height="5" fill="#909000"/><rect x="7.5" y="3" width="5.5" height="6" rx="1.5" fill="#a8a8a8" stroke="#000" stroke-width="1.1"/><rect x="9" y="4" width="1" height="5" fill="#909000"/><rect x="2" y="12.5" width="5" height="1.2" fill="#00a000"/><path d="M7 11 l3-2.5 l2 0" stroke="#909000" stroke-width="1.3" fill="none"/><path d="M10.5 9.5 l2-1.5" stroke="#d00000" stroke-width="1"/><ellipse cx="12" cy="13" rx="4" ry="2.8" fill="#c4c4c4" stroke="#000" stroke-width="1.1" stroke-dasharray="1.5 0.5"/><rect x="10" y="11.5" width="2" height="2" fill="#f4f4f4"/><path d="M8.5 14.5l1.5 1.3" stroke="#0000c0" stroke-width="1"/></svg>
<div class="t s5" style="left:85px;top:465px">CN=Group Policy Creator Owners</div>
<div class="eb" style="left:50px;top:485px"><div class="ebh"></div><div class="ebv"></div></div>
<div class="dh" style="left:59px;top:489px;width:6px"></div>
<svg class="ic" style="left:65px;top:481px" width="16" height="16" viewBox="0 0 16 16"><ellipse cx="9.2" cy="12.3" rx="5.6" ry="3.3" fill="#c0c0c0" stroke="#000" stroke-width="1.2" stroke-dasharray="1.6 0.5"/><rect x="7" y="10" width="2" height="2" fill="#fff"/><path d="M13 14.5l1.5-1.5" stroke="#20a0c0" stroke-width="1"/><rect x="3.5" y="0.5" width="6" height="7.5" rx="1.8" fill="#8c8c8c" stroke="#000" stroke-width="1.2"/><rect x="5" y="2" width="2.5" height="2.5" fill="#c8c8c8"/><rect x="5" y="8" width="3" height="1.8" fill="#808000"/><rect x="9" y="5" width="1" height="2" fill="#c02020"/></svg>
<div class="t s5" style="left:85px;top:481px">CN=Guest</div>
<div class="eb" style="left:50px;top:501px"><div class="ebh"></div><div class="ebv"></div></div>
<div class="dh" style="left:59px;top:505px;width:6px"></div>
<svg class="ic" style="left:65px;top:497px" width="16" height="16" viewBox="0 0 16 16"><path d="M0 12.5 L2 7.5 h6 l1 5z" fill="#a8a8a8" stroke="#000" stroke-width="1.1"/><rect x="1.5" y="1" width="6" height="7" rx="1.6" fill="#b0b0b0" stroke="#000" stroke-width="1.1"/><rect x="3" y="2.5" width="2" height="2" fill="#e8e8e8"/><rect x="2" y="2" width="1" height="5" fill="#909000"/><rect x="7.5" y="3" width="5.5" height="6" rx="1.5" fill="#a8a8a8" stroke="#000" stroke-width="1.1"/><rect x="9" y="4" width="1" height="5" fill="#909000"/><rect x="2" y="12.5" width="5" height="1.2" fill="#00a000"/><path d="M7 11 l3-2.5 l2 0" stroke="#909000" stroke-width="1.3" fill="none"/><path d="M10.5 9.5 l2-1.5" stroke="#d00000" stroke-width="1"/><ellipse cx="12" cy="13" rx="4" ry="2.8" fill="#c4c4c4" stroke="#000" stroke-width="1.1" stroke-dasharray="1.5 0.5"/><rect x="10" y="11.5" width="2" height="2" fill="#f4f4f4"/><path d="M8.5 14.5l1.5 1.3" stroke="#0000c0" stroke-width="1"/></svg>
<div class="t s5" style="left:85px;top:497px">CN=Key Admins</div>
<div class="eb" style="left:50px;top:517px"><div class="ebh"></div><div class="ebv"></div></div>
<div class="dh" style="left:59px;top:521px;width:6px"></div>
<svg class="ic" style="left:65px;top:513px" width="16" height="16" viewBox="0 0 16 16"><ellipse cx="9.2" cy="12.3" rx="5.6" ry="3.3" fill="#c0c0c0" stroke="#000" stroke-width="1.2" stroke-dasharray="1.6 0.5"/><rect x="7" y="10" width="2" height="2" fill="#fff"/><path d="M13 14.5l1.5-1.5" stroke="#20a0c0" stroke-width="1"/><rect x="3.5" y="0.5" width="6" height="7.5" rx="1.8" fill="#8c8c8c" stroke="#000" stroke-width="1.2"/><rect x="5" y="2" width="2.5" height="2.5" fill="#c8c8c8"/><rect x="5" y="8" width="3" height="1.8" fill="#808000"/><rect x="9" y="5" width="1" height="2" fill="#c02020"/></svg>
<div class="t s5" style="left:85px;top:513px">CN=krbtgt</div>
<div class="eb" style="left:50px;top:533px"><div class="ebh"></div><div class="ebv"></div></div>
<div class="dh" style="left:59px;top:537px;width:6px"></div>
<svg class="ic" style="left:65px;top:529px" width="16" height="16" viewBox="0 0 16 16"><ellipse cx="9.2" cy="12.3" rx="5.6" ry="3.3" fill="#c0c0c0" stroke="#000" stroke-width="1.2" stroke-dasharray="1.6 0.5"/><rect x="7" y="10" width="2" height="2" fill="#fff"/><path d="M13 14.5l1.5-1.5" stroke="#20a0c0" stroke-width="1"/><rect x="3.5" y="0.5" width="6" height="7.5" rx="1.8" fill="#8c8c8c" stroke="#000" stroke-width="1.2"/><rect x="5" y="2" width="2.5" height="2.5" fill="#c8c8c8"/><rect x="5" y="8" width="3" height="1.8" fill="#808000"/><rect x="9" y="5" width="1" height="2" fill="#c02020"/></svg>
<div class="t s5" style="left:85px;top:529px">CN=Oyama</div>
<div class="eb" style="left:50px;top:549px"><div class="ebh"></div><div class="ebv"></div></div>
<div class="dh" style="left:59px;top:553px;width:6px"></div>
<svg class="ic" style="left:65px;top:545px" width="16" height="16" viewBox="0 0 16 16"><path d="M0 12.5 L2 7.5 h6 l1 5z" fill="#a8a8a8" stroke="#000" stroke-width="1.1"/><rect x="1.5" y="1" width="6" height="7" rx="1.6" fill="#b0b0b0" stroke="#000" stroke-width="1.1"/><rect x="3" y="2.5" width="2" height="2" fill="#e8e8e8"/><rect x="2" y="2" width="1" height="5" fill="#909000"/><rect x="7.5" y="3" width="5.5" height="6" rx="1.5" fill="#a8a8a8" stroke="#000" stroke-width="1.1"/><rect x="9" y="4" width="1" height="5" fill="#909000"/><rect x="2" y="12.5" width="5" height="1.2" fill="#00a000"/><path d="M7 11 l3-2.5 l2 0" stroke="#909000" stroke-width="1.3" fill="none"/><path d="M10.5 9.5 l2-1.5" stroke="#d00000" stroke-width="1"/><ellipse cx="12" cy="13" rx="4" ry="2.8" fill="#c4c4c4" stroke="#000" stroke-width="1.1" stroke-dasharray="1.5 0.5"/><rect x="10" y="11.5" width="2" height="2" fill="#f4f4f4"/><path d="M8.5 14.5l1.5 1.3" stroke="#0000c0" stroke-width="1"/></svg>
<div class="t s5" style="left:85px;top:545px">CN=Protected Users</div>
<div class="eb" style="left:50px;top:565px"><div class="ebh"></div><div class="ebv"></div></div>
<div class="dh" style="left:59px;top:569px;width:6px"></div>
<svg class="ic" style="left:65px;top:561px" width="16" height="16" viewBox="0 0 16 16"><path d="M0 12.5 L2 7.5 h6 l1 5z" fill="#a8a8a8" stroke="#000" stroke-width="1.1"/><rect x="1.5" y="1" width="6" height="7" rx="1.6" fill="#b0b0b0" stroke="#000" stroke-width="1.1"/><rect x="3" y="2.5" width="2" height="2" fill="#e8e8e8"/><rect x="2" y="2" width="1" height="5" fill="#909000"/><rect x="7.5" y="3" width="5.5" height="6" rx="1.5" fill="#a8a8a8" stroke="#000" stroke-width="1.1"/><rect x="9" y="4" width="1" height="5" fill="#909000"/><rect x="2" y="12.5" width="5" height="1.2" fill="#00a000"/><path d="M7 11 l3-2.5 l2 0" stroke="#909000" stroke-width="1.3" fill="none"/><path d="M10.5 9.5 l2-1.5" stroke="#d00000" stroke-width="1"/><ellipse cx="12" cy="13" rx="4" ry="2.8" fill="#c4c4c4" stroke="#000" stroke-width="1.1" stroke-dasharray="1.5 0.5"/><rect x="10" y="11.5" width="2" height="2" fill="#f4f4f4"/><path d="M8.5 14.5l1.5 1.3" stroke="#0000c0" stroke-width="1"/></svg>
<div class="t s5" style="left:85px;top:561px">CN=RAS and IAS Servers</div>
<div class="eb" style="left:50px;top:581px"><div class="ebh"></div><div class="ebv"></div></div>
<div class="dh" style="left:59px;top:585px;width:6px"></div>
<svg class="ic" style="left:65px;top:577px" width="16" height="16" viewBox="0 0 16 16"><path d="M0 12.5 L2 7.5 h6 l1 5z" fill="#a8a8a8" stroke="#000" stroke-width="1.1"/><rect x="1.5" y="1" width="6" height="7" rx="1.6" fill="#b0b0b0" stroke="#000" stroke-width="1.1"/><rect x="3" y="2.5" width="2" height="2" fill="#e8e8e8"/><rect x="2" y="2" width="1" height="5" fill="#909000"/><rect x="7.5" y="3" width="5.5" height="6" rx="1.5" fill="#a8a8a8" stroke="#000" stroke-width="1.1"/><rect x="9" y="4" width="1" height="5" fill="#909000"/><rect x="2" y="12.5" width="5" height="1.2" fill="#00a000"/><path d="M7 11 l3-2.5 l2 0" stroke="#909000" stroke-width="1.3" fill="none"/><path d="M10.5 9.5 l2-1.5" stroke="#d00000" stroke-width="1"/><ellipse cx="12" cy="13" rx="4" ry="2.8" fill="#c4c4c4" stroke="#000" stroke-width="1.1" stroke-dasharray="1.5 0.5"/><rect x="10" y="11.5" width="2" height="2" fill="#f4f4f4"/><path d="M8.5 14.5l1.5 1.3" stroke="#0000c0" stroke-width="1"/></svg>
<div class="t s5" style="left:85px;top:577px">CN=Read-only Domain Controllers</div>
<div class="eb" style="left:50px;top:597px"><div class="ebh"></div><div class="ebv"></div></div>
<div class="dh" style="left:59px;top:601px;width:6px"></div>
<svg class="ic" style="left:65px;top:593px" width="16" height="16" viewBox="0 0 16 16"><path d="M0 12.5 L2 7.5 h6 l1 5z" fill="#a8a8a8" stroke="#000" stroke-width="1.1"/><rect x="1.5" y="1" width="6" height="7" rx="1.6" fill="#b0b0b0" stroke="#000" stroke-width="1.1"/><rect x="3" y="2.5" width="2" height="2" fill="#e8e8e8"/><rect x="2" y="2" width="1" height="5" fill="#909000"/><rect x="7.5" y="3" width="5.5" height="6" rx="1.5" fill="#a8a8a8" stroke="#000" stroke-width="1.1"/><rect x="9" y="4" width="1" height="5" fill="#909000"/><rect x="2" y="12.5" width="5" height="1.2" fill="#00a000"/><path d="M7 11 l3-2.5 l2 0" stroke="#909000" stroke-width="1.3" fill="none"/><path d="M10.5 9.5 l2-1.5" stroke="#d00000" stroke-width="1"/><ellipse cx="12" cy="13" rx="4" ry="2.8" fill="#c4c4c4" stroke="#000" stroke-width="1.1" stroke-dasharray="1.5 0.5"/><rect x="10" y="11.5" width="2" height="2" fill="#f4f4f4"/><path d="M8.5 14.5l1.5 1.3" stroke="#0000c0" stroke-width="1"/></svg>
<div class="t s5" style="left:85px;top:593px">CN=Schema Admins</div>
<div class="eb" style="left:50px;top:613px"><div class="ebh"></div><div class="ebv"></div></div>
<div class="dh" style="left:59px;top:617px;width:6px"></div>
<svg class="ic" style="left:65px;top:609px" width="16" height="16" viewBox="0 0 16 16"><ellipse cx="9.2" cy="12.3" rx="5.6" ry="3.3" fill="#c0c0c0" stroke="#000" stroke-width="1.2" stroke-dasharray="1.6 0.5"/><rect x="7" y="10" width="2" height="2" fill="#fff"/><path d="M13 14.5l1.5-1.5" stroke="#20a0c0" stroke-width="1"/><rect x="3.5" y="0.5" width="6" height="7.5" rx="1.8" fill="#8c8c8c" stroke="#000" stroke-width="1.2"/><rect x="5" y="2" width="2.5" height="2.5" fill="#c8c8c8"/><rect x="5" y="8" width="3" height="1.8" fill="#808000"/><rect x="9" y="5" width="1" height="2" fill="#c02020"/></svg>
<div class="t s5" style="left:85px;top:609px">CN=SZ$</div>
<div class="eb" style="left:50px;top:629px"><div class="ebh"></div><div class="ebv"></div></div>
<div class="dh" style="left:59px;top:633px;width:6px"></div>
<svg class="ic" style="left:65px;top:625px" width="16" height="16" viewBox="0 0 16 16"><ellipse cx="9.2" cy="12.3" rx="5.6" ry="3.3" fill="#c0c0c0" stroke="#000" stroke-width="1.2" stroke-dasharray="1.6 0.5"/><rect x="7" y="10" width="2" height="2" fill="#fff"/><path d="M13 14.5l1.5-1.5" stroke="#20a0c0" stroke-width="1"/><rect x="3.5" y="0.5" width="6" height="7.5" rx="1.8" fill="#8c8c8c" stroke="#000" stroke-width="1.2"/><rect x="5" y="2" width="2.5" height="2.5" fill="#c8c8c8"/><rect x="5" y="8" width="3" height="1.8" fill="#808000"/><rect x="9" y="5" width="1" height="2" fill="#c02020"/></svg>
<div class="t s5" style="left:85px;top:625px">CN=testnoadmin</div>
<div class="eb" style="left:12px;top:646px"><div class="ebh"></div><div class="ebv"></div></div>
<svg class="ic" style="left:27px;top:641px" width="16" height="16" viewBox="0 0 16 16"><path d="M0.5 1.5h12l2.5 2.5v11.5h-14.5z" fill="#fff" stroke="#a0a0a0"/><path d="M12.5 1.5v3h3" fill="none" stroke="#a0a0a0"/><path d="M2.5 4.5h4M5.5 4.5v2.5M3.5 7.5h6v5h-6z" fill="none" stroke="#a0a0a0"/></svg>
<div class="t s5" style="left:48px;top:641px">CN=Configuration,DC=sec,DC=com</div>
<div class="a" style="left:247px;top:0px;width:17px;height:649px;background:#f0f0f0"></div>
<div class="a" style="left:249px;top:19px;width:13px;height:17px;background:#cdcdcd"></div>
<svg class="a" style="left:250px;top:6px" width="10" height="7" viewBox="0 0 10 7"><path d="M1 5.5l4-4l4 4" stroke="#606060" stroke-width="2.2" fill="none"/></svg>
<svg class="a" style="left:250px;top:638px" width="10" height="7" viewBox="0 0 10 7"><path d="M1 1.5l4 4l4-4" stroke="#606060" stroke-width="2.2" fill="none"/></svg>
<div class="a" style="left:0px;top:650px;width:266px;height:16px;background:#f0f0f0"></div>
<div class="a" style="left:3px;top:650px;width:141px;height:16px;background:#cdcdcd"></div>
<svg class="a" style="left:234px;top:653px" width="7" height="10" viewBox="0 0 7 10"><path d="M1.5 1l4 4l-4 4" stroke="#606060" stroke-width="2.2" fill="none"/></svg>
</div>
<div class="a" style="left:269px;top:103px;width:552px;height:669px;border:1px solid #828790;background:#fff;overflow:hidden">
<div class="a" style="left:150px;top:1px;width:1px;height:23px;background:#e5e5e5"></div>
<div class="a" style="left:300px;top:1px;width:1px;height:23px;background:#e5e5e5"></div>
<div class="a" style="left:345px;top:1px;width:1px;height:23px;background:#e5e5e5"></div>
<div class="t " style="left:7px;top:5px;line-height:17px">Attribute</div>
<div class="t s5" style="left:156px;top:5px;line-height:17px">Syntax</div>
<div class="t s5" style="left:307px;top:5px;line-height:17px">Count</div>
<div class="t s5" style="left:351px;top:5px;line-height:17px">Value(s)</div>
<svg class="ic" style="left:7px;top:25px" width="14" height="16" viewBox="0 0 14 16"><path d="M0.5 15.5V0.5h9l3 3v12z" fill="#fff" stroke="#8a8a8a"/><path d="M9 3.5h3.5v12H0" fill="none" stroke="#000" stroke-width="1.1"/><path d="M5 6h5l0.5 5.6h-5.5z" fill="#000"/><rect x="6" y="6.8" width="1.5" height="1.5" fill="#f00"/><rect x="8.2" y="6.8" width="1.5" height="1.5" fill="#0c0"/><rect x="6" y="9" width="1.5" height="1.5" fill="#00f"/><rect x="8.2" y="9" width="1.5" height="1.5" fill="#ee0"/><rect x="2" y="6" width="1" height="1" fill="#f00"/><rect x="2.5" y="7.2" width="2.5" height="0.9" fill="#f00"/><rect x="2" y="8.6" width="3" height="0.9" fill="#00f"/><rect x="2" y="10.2" width="3" height="0.9" fill="#000"/></svg>
<div class="t s5" style="left:22.5px;top:26px;line-height:17px">accountExpires</div>
<div class="t s6" style="left:156.5px;top:26px;line-height:17px">Integer8</div>
<div class="t s5" style="left:307px;top:26px;line-height:17px">1</div>
<div class="t s8" style="left:352px;top:26px;line-height:17px">0x0</div>
<svg class="ic" style="left:7px;top:42px" width="14" height="16" viewBox="0 0 14 16"><path d="M0.5 15.5V0.5h9l3 3v12z" fill="#fff" stroke="#8a8a8a"/><path d="M9 3.5h3.5v12H0" fill="none" stroke="#000" stroke-width="1.1"/><path d="M5 6h5l0.5 5.6h-5.5z" fill="#000"/><rect x="6" y="6.8" width="1.5" height="1.5" fill="#f00"/><rect x="8.2" y="6.8" width="1.5" height="1.5" fill="#0c0"/><rect x="6" y="9" width="1.5" height="1.5" fill="#00f"/><rect x="8.2" y="9" width="1.5" height="1.5" fill="#ee0"/><rect x="2" y="6" width="1" height="1" fill="#f00"/><rect x="2.5" y="7.2" width="2.5" height="0.9" fill="#f00"/><rect x="2" y="8.6" width="3" height="0.9" fill="#00f"/><rect x="2" y="10.2" width="3" height="0.9" fill="#000"/></svg>
<div class="t s5" style="left:22.5px;top:43px;line-height:17px">adminCount</div>
<div class="t s6" style="left:156.5px;top:43px;line-height:17px">Integer</div>
<div class="t s5" style="left:307px;top:43px;line-height:17px">1</div>
<div class="t s8" style="left:352px;top:43px;line-height:17px">1</div>
<svg class="ic" style="left:7px;top:59px" width="14" height="16" viewBox="0 0 14 16"><path d="M0.5 15.5V0.5h9l3 3v12z" fill="#fff" stroke="#8a8a8a"/><path d="M9 3.5h3.5v12H0" fill="none" stroke="#000" stroke-width="1.1"/><path d="M5 6h5l0.5 5.6h-5.5z" fill="#000"/><rect x="6" y="6.8" width="1.5" height="1.5" fill="#f00"/><rect x="8.2" y="6.8" width="1.5" height="1.5" fill="#0c0"/><rect x="6" y="9" width="1.5" height="1.5" fill="#00f"/><rect x="8.2" y="9" width="1.5" height="1.5" fill="#ee0"/><rect x="2" y="6" width="1" height="1" fill="#f00"/><rect x="2.5" y="7.2" width="2.5" height="0.9" fill="#f00"/><rect x="2" y="8.6" width="3" height="0.9" fill="#00f"/><rect x="2" y="10.2" width="3" height="0.9" fill="#000"/></svg>
<div class="t s5" style="left:22.5px;top:60px;line-height:17px">badPasswordTime</div>
<div class="t s6" style="left:156.5px;top:60px;line-height:17px">Integer8</div>
<div class="t s5" style="left:307px;top:60px;line-height:17px">1</div>
<div class="t s8 dt" style="left:352px;top:60px;line-height:17px">2024/2/22 23:46:13</div>
<svg class="ic" style="left:7px;top:76px" width="14" height="16" viewBox="0 0 14 16"><path d="M0.5 15.5V0.5h9l3 3v12z" fill="#fff" stroke="#8a8a8a"/><path d="M9 3.5h3.5v12H0" fill="none" stroke="#000" stroke-width="1.1"/><path d="M5 6h5l0.5 5.6h-5.5z" fill="#000"/><rect x="6" y="6.8" width="1.5" height="1.5" fill="#f00"/><rect x="8.2" y="6.8" width="1.5" height="1.5" fill="#0c0"/><rect x="6" y="9" width="1.5" height="1.5" fill="#00f"/><rect x="8.2" y="9" width="1.5" height="1.5" fill="#ee0"/><rect x="2" y="6" width="1" height="1" fill="#f00"/><rect x="2.5" y="7.2" width="2.5" height="0.9" fill="#f00"/><rect x="2" y="8.6" width="3" height="0.9" fill="#00f"/><rect x="2" y="10.2" width="3" height="0.9" fill="#000"/></svg>
<div class="t s5" style="left:22.5px;top:77px;line-height:17px">badPwdCount</div>
<div class="t s6" style="left:156.5px;top:77px;line-height:17px">Integer</div>
<div class="t s5" style="left:307px;top:77px;line-height:17px">1</div>
<div class="t s8" style="left:352px;top:77px;line-height:17px">0</div>
<svg class="ic" style="left:7px;top:93px" width="14" height="16" viewBox="0 0 14 16"><path d="M0.5 15.5V0.5h9l3 3v12z" fill="#fff" stroke="#8a8a8a"/><path d="M9 3.5h3.5v12H0" fill="none" stroke="#000" stroke-width="1.1"/><path d="M5 6h5l0.5 5.6h-5.5z" fill="#000"/><rect x="6" y="6.8" width="1.5" height="1.5" fill="#f00"/><rect x="8.2" y="6.8" width="1.5" height="1.5" fill="#0c0"/><rect x="6" y="9" width="1.5" height="1.5" fill="#00f"/><rect x="8.2" y="9" width="1.5" height="1.5" fill="#ee0"/><rect x="2" y="6" width="1" height="1" fill="#f00"/><rect x="2.5" y="7.2" width="2.5" height="0.9" fill="#f00"/><rect x="2" y="8.6" width="3" height="0.9" fill="#00f"/><rect x="2" y="10.2" width="3" height="0.9" fill="#000"/></svg>
<div class="t s5" style="left:22.5px;top:94px;line-height:17px">cn</div>
<div class="t s6" style="left:156.5px;top:94px;line-height:17px">DirectoryString</div>
<div class="t s5" style="left:307px;top:94px;line-height:17px">1</div>
<div class="t s8" style="left:352px;top:94px;line-height:17px">Administrator</div>
<svg class="ic" style="left:7px;top:110px" width="14" height="16" viewBox="0 0 14 16"><path d="M0.5 15.5V0.5h9l3 3v12z" fill="#fff" stroke="#8a8a8a"/><path d="M9 3.5h3.5v12H0" fill="none" stroke="#000" stroke-width="1.1"/><path d="M5 6h5l0.5 5.6h-5.5z" fill="#000"/><rect x="6" y="6.8" width="1.5" height="1.5" fill="#f00"/><rect x="8.2" y="6.8" width="1.5" height="1.5" fill="#0c0"/><rect x="6" y="9" width="1.5" height="1.5" fill="#00f"/><rect x="8.2" y="9" width="1.5" height="1.5" fill="#ee0"/><rect x="2" y="6" width="1" height="1" fill="#f00"/><rect x="2.5" y="7.2" width="2.5" height="0.9" fill="#f00"/><rect x="2" y="8.6" width="3" height="0.9" fill="#00f"/><rect x="2" y="10.2" width="3" height="0.9" fill="#000"/></svg>
<div class="t s5" style="left:22.5px;top:111px;line-height:17px">codePage</div>
<div class="t s6" style="left:156.5px;top:111px;line-height:17px">Integer</div>
<div class="t s5" style="left:307px;top:111px;line-height:17px">1</div>
<div class="t s8" style="left:352px;top:111px;line-height:17px">0</div>
<svg class="ic" style="left:7px;top:127px" width="14" height="16" viewBox="0 0 14 16"><path d="M0.5 15.5V0.5h9l3 3v12z" fill="#fff" stroke="#8a8a8a"/><path d="M9 3.5h3.5v12H0" fill="none" stroke="#000" stroke-width="1.1"/><path d="M5 6h5l0.5 5.6h-5.5z" fill="#000"/><rect x="6" y="6.8" width="1.5" height="1.5" fill="#f00"/><rect x="8.2" y="6.8" width="1.5" height="1.5" fill="#0c0"/><rect x="6" y="9" width="1.5" height="1.5" fill="#00f"/><rect x="8.2" y="9" width="1.5" height="1.5" fill="#ee0"/><rect x="2" y="6" width="1" height="1" fill="#f00"/><rect x="2.5" y="7.2" width="2.5" height="0.9" fill="#f00"/><rect x="2" y="8.6" width="3" height="0.9" fill="#00f"/><rect x="2" y="10.2" width="3" height="0.9" fill="#000"/></svg>
<div class="t s5" style="left:22.5px;top:128px;line-height:17px">countryCode</div>
<div class="t s6" style="left:156.5px;top:128px;line-height:17px">Integer</div>
<div class="t s5" style="left:307px;top:128px;line-height:17px">1</div>
<div class="t s8" style="left:352px;top:128px;line-height:17px">0</div>
<svg class="ic" style="left:7px;top:144px" width="14" height="16" viewBox="0 0 14 16"><path d="M0.5 15.5V0.5h9l3 3v12z" fill="#fff" stroke="#8a8a8a"/><path d="M9 3.5h3.5v12H0" fill="none" stroke="#000" stroke-width="1.1"/><path d="M5 6h5l0.5 5.6h-5.5z" fill="#000"/><rect x="6" y="6.8" width="1.5" height="1.5" fill="#f00"/><rect x="8.2" y="6.8" width="1.5" height="1.5" fill="#0c0"/><rect x="6" y="9" width="1.5" height="1.5" fill="#00f"/><rect x="8.2" y="9" width="1.5" height="1.5" fill="#ee0"/><rect x="2" y="6" width="1" height="1" fill="#f00"/><rect x="2.5" y="7.2" width="2.5" height="0.9" fill="#f00"/><rect x="2" y="8.6" width="3" height="0.9" fill="#00f"/><rect x="2" y="10.2" width="3" height="0.9" fill="#000"/></svg>
<div class="t s5" style="left:22.5px;top:145px;line-height:17px">description</div>
<div class="t s6" style="left:156.5px;top:145px;line-height:17px">DirectoryString</div>
<div class="t s5" style="left:307px;top:145px;line-height:17px">1</div>
<div class="t s8 dt" style="left:352px;top:145px;line-height:17px"><span style="font-size:11.8px">管理计算机(域)的内置帐户</span></div>
<svg class="ic" style="left:7px;top:161px" width="14" height="16" viewBox="0 0 14 16"><path d="M0.5 15.5V0.5h9l3 3v12z" fill="#fff" stroke="#8a8a8a"/><path d="M9 3.5h3.5v12H0" fill="none" stroke="#000" stroke-width="1.1"/><path d="M5 6h5l0.5 5.6h-5.5z" fill="#000"/><rect x="6" y="6.8" width="1.5" height="1.5" fill="#f00"/><rect x="8.2" y="6.8" width="1.5" height="1.5" fill="#0c0"/><rect x="6" y="9" width="1.5" height="1.5" fill="#00f"/><rect x="8.2" y="9" width="1.5" height="1.5" fill="#ee0"/><rect x="2" y="6" width="1" height="1" fill="#f00"/><rect x="2.5" y="7.2" width="2.5" height="0.9" fill="#f00"/><rect x="2" y="8.6" width="3" height="0.9" fill="#00f"/><rect x="2" y="10.2" width="3" height="0.9" fill="#000"/></svg>
<div class="t s5" style="left:22.5px;top:162px;line-height:17px">distinguishedName</div>
<div class="t s6" style="left:156.5px;top:162px;line-height:17px">DN</div>
<div class="t s5" style="left:307px;top:162px;line-height:17px">1</div>
<div class="t s8" style="left:352px;top:162px;line-height:17px">CN=Administrator,CN=Users,DC=sec,DC=com</div>
<svg class="ic" style="left:7px;top:178px" width="14" height="16" viewBox="0 0 14 16"><path d="M0.5 15.5V0.5h9l3 3v12z" fill="#fff" stroke="#8a8a8a"/><path d="M9 3.5h3.5v12H0" fill="none" stroke="#000" stroke-width="1.1"/><path d="M5 6h5l0.5 5.6h-5.5z" fill="#000"/><rect x="6" y="6.8" width="1.5" height="1.5" fill="#f00"/><rect x="8.2" y="6.8" width="1.5" height="1.5" fill="#0c0"/><rect x="6" y="9" width="1.5" height="1.5" fill="#00f"/><rect x="8.2" y="9" width="1.5" height="1.5" fill="#ee0"/><rect x="2" y="6" width="1" height="1" fill="#f00"/><rect x="2.5" y="7.2" width="2.5" height="0.9" fill="#f00"/><rect x="2" y="8.6" width="3" height="0.9" fill="#00f"/><rect x="2" y="10.2" width="3" height="0.9" fill="#000"/></svg>
<div class="t s5" style="left:22.5px;top:179px;line-height:17px">dSCorePropagationData</div>
<div class="t s6" style="left:156.5px;top:179px;line-height:17px">GeneralizedTime</div>
<div class="t s5" style="left:307px;top:179px;line-height:17px">4</div>
<div class="t s8 dt" style="left:352px;top:179px;line-height:17px">2024/2/6 0:45:31;2024/2/6 0:45:31;2024/2/6 0:45:31</div>
<svg class="ic" style="left:7px;top:195px" width="14" height="16" viewBox="0 0 14 16"><path d="M0.5 15.5V0.5h9l3 3v12z" fill="#fff" stroke="#8a8a8a"/><path d="M9 3.5h3.5v12H0" fill="none" stroke="#000" stroke-width="1.1"/><path d="M5 6h5l0.5 5.6h-5.5z" fill="#000"/><rect x="6" y="6.8" width="1.5" height="1.5" fill="#f00"/><rect x="8.2" y="6.8" width="1.5" height="1.5" fill="#0c0"/><rect x="6" y="9" width="1.5" height="1.5" fill="#00f"/><rect x="8.2" y="9" width="1.5" height="1.5" fill="#ee0"/><rect x="2" y="6" width="1" height="1" fill="#f00"/><rect x="2.5" y="7.2" width="2.5" height="0.9" fill="#f00"/><rect x="2" y="8.6" width="3" height="0.9" fill="#00f"/><rect x="2" y="10.2" width="3" height="0.9" fill="#000"/></svg>
<div class="t s5" style="left:22.5px;top:196px;line-height:17px">instanceType</div>
<div class="t s6" style="left:156.5px;top:196px;line-height:17px">Integer</div>
<div class="t s5" style="left:307px;top:196px;line-height:17px">1</div>
<div class="t s8" style="left:352px;top:196px;line-height:17px">4</div>
<svg class="ic" style="left:7px;top:212px" width="14" height="16" viewBox="0 0 14 16"><path d="M0.5 15.5V0.5h9l3 3v12z" fill="#fff" stroke="#8a8a8a"/><path d="M9 3.5h3.5v12H0" fill="none" stroke="#000" stroke-width="1.1"/><path d="M5 6h5l0.5 5.6h-5.5z" fill="#000"/><rect x="6" y="6.8" width="1.5" height="1.5" fill="#f00"/><rect x="8.2" y="6.8" width="1.5" height="1.5" fill="#0c0"/><rect x="6" y="9" width="1.5" height="1.5" fill="#00f"/><rect x="8.2" y="9" width="1.5" height="1.5" fill="#ee0"/><rect x="2" y="6" width="1" height="1" fill="#f00"/><rect x="2.5" y="7.2" width="2.5" height="0.9" fill="#f00"/><rect x="2" y="8.6" width="3" height="0.9" fill="#00f"/><rect x="2" y="10.2" width="3" height="0.9" fill="#000"/></svg>
<div class="t s5" style="left:22.5px;top:213px;line-height:17px">isCriticalSystemObject</div>
<div class="t s6" style="left:156.5px;top:213px;line-height:17px">Boolean</div>
<div class="t s5" style="left:307px;top:213px;line-height:17px">1</div>
<div class="t s8" style="left:352px;top:213px;line-height:17px">TRUE</div>
<svg class="ic" style="left:7px;top:229px" width="14" height="16" viewBox="0 0 14 16"><path d="M0.5 15.5V0.5h9l3 3v12z" fill="#fff" stroke="#8a8a8a"/><path d="M9 3.5h3.5v12H0" fill="none" stroke="#000" stroke-width="1.1"/><path d="M5 6h5l0.5 5.6h-5.5z" fill="#000"/><rect x="6" y="6.8" width="1.5" height="1.5" fill="#f00"/><rect x="8.2" y="6.8" width="1.5" height="1.5" fill="#0c0"/><rect x="6" y="9" width="1.5" height="1.5" fill="#00f"/><rect x="8.2" y="9" width="1.5" height="1.5" fill="#ee0"/><rect x="2" y="6" width="1" height="1" fill="#f00"/><rect x="2.5" y="7.2" width="2.5" height="0.9" fill="#f00"/><rect x="2" y="8.6" width="3" height="0.9" fill="#00f"/><rect x="2" y="10.2" width="3" height="0.9" fill="#000"/></svg>
<div class="t s5" style="left:22.5px;top:230px;line-height:17px">lastLogoff</div>
<div class="t s6" style="left:156.5px;top:230px;line-height:17px">Integer8</div>
<div class="t s5" style="left:307px;top:230px;line-height:17px">1</div>
<div class="t s8" style="left:352px;top:230px;line-height:17px">0x0</div>
<svg class="ic" style="left:7px;top:246px" width="14" height="16" viewBox="0 0 14 16"><path d="M0.5 15.5V0.5h9l3 3v12z" fill="#fff" stroke="#8a8a8a"/><path d="M9 3.5h3.5v12H0" fill="none" stroke="#000" stroke-width="1.1"/><path d="M5 6h5l0.5 5.6h-5.5z" fill="#000"/><rect x="6" y="6.8" width="1.5" height="1.5" fill="#f00"/><rect x="8.2" y="6.8" width="1.5" height="1.5" fill="#0c0"/><rect x="6" y="9" width="1.5" height="1.5" fill="#00f"/><rect x="8.2" y="9" width="1.5" height="1.5" fill="#ee0"/><rect x="2" y="6" width="1" height="1" fill="#f00"/><rect x="2.5" y="7.2" width="2.5" height="0.9" fill="#f00"/><rect x="2" y="8.6" width="3" height="0.9" fill="#00f"/><rect x="2" y="10.2" width="3" height="0.9" fill="#000"/></svg>
<div class="t s5" style="left:22.5px;top:247px;line-height:17px">lastLogon</div>
<div class="t s6" style="left:156.5px;top:247px;line-height:17px">Integer8</div>
<div class="t s5" style="left:307px;top:247px;line-height:17px">1</div>
<div class="t s8 dt" style="left:352px;top:247px;line-height:17px">2024/2/22 23:46:16</div>
<svg class="ic" style="left:7px;top:263px" width="14" height="16" viewBox="0 0 14 16"><path d="M0.5 15.5V0.5h9l3 3v12z" fill="#fff" stroke="#8a8a8a"/><path d="M9 3.5h3.5v12H0" fill="none" stroke="#000" stroke-width="1.1"/><path d="M5 6h5l0.5 5.6h-5.5z" fill="#000"/><rect x="6" y="6.8" width="1.5" height="1.5" fill="#f00"/><rect x="8.2" y="6.8" width="1.5" height="1.5" fill="#0c0"/><rect x="6" y="9" width="1.5" height="1.5" fill="#00f"/><rect x="8.2" y="9" width="1.5" height="1.5" fill="#ee0"/><rect x="2" y="6" width="1" height="1" fill="#f00"/><rect x="2.5" y="7.2" width="2.5" height="0.9" fill="#f00"/><rect x="2" y="8.6" width="3" height="0.9" fill="#00f"/><rect x="2" y="10.2" width="3" height="0.9" fill="#000"/></svg>
<div class="t s5" style="left:22.5px;top:264px;line-height:17px">lastLogonTimestamp</div>
<div class="t s6" style="left:156.5px;top:264px;line-height:17px">Integer8</div>
<div class="t s5" style="left:307px;top:264px;line-height:17px">1</div>
<div class="t s8 dt" style="left:352px;top:264px;line-height:17px">2024/2/17 16:49:25</div>
<svg class="ic" style="left:7px;top:280px" width="14" height="16" viewBox="0 0 14 16"><path d="M0.5 15.5V0.5h9l3 3v12z" fill="#fff" stroke="#8a8a8a"/><path d="M9 3.5h3.5v12H0" fill="none" stroke="#000" stroke-width="1.1"/><path d="M5 6h5l0.5 5.6h-5.5z" fill="#000"/><rect x="6" y="6.8" width="1.5" height="1.5" fill="#f00"/><rect x="8.2" y="6.8" width="1.5" height="1.5" fill="#0c0"/><rect x="6" y="9" width="1.5" height="1.5" fill="#00f"/><rect x="8.2" y="9" width="1.5" height="1.5" fill="#ee0"/><rect x="2" y="6" width="1" height="1" fill="#f00"/><rect x="2.5" y="7.2" width="2.5" height="0.9" fill="#f00"/><rect x="2" y="8.6" width="3" height="0.9" fill="#00f"/><rect x="2" y="10.2" width="3" height="0.9" fill="#000"/></svg>
<div class="t s5" style="left:22.5px;top:281px;line-height:17px">lockoutTime</div>
<div class="t s6" style="left:156.5px;top:281px;line-height:17px">Integer8</div>
<div class="t s5" style="left:307px;top:281px;line-height:17px">1</div>
<div class="t s8" style="left:352px;top:281px;line-height:17px">0x0</div>
<svg class="ic" style="left:7px;top:297px" width="14" height="16" viewBox="0 0 14 16"><path d="M0.5 15.5V0.5h9l3 3v12z" fill="#fff" stroke="#8a8a8a"/><path d="M9 3.5h3.5v12H0" fill="none" stroke="#000" stroke-width="1.1"/><path d="M5 6h5l0.5 5.6h-5.5z" fill="#000"/><rect x="6" y="6.8" width="1.5" height="1.5" fill="#f00"/><rect x="8.2" y="6.8" width="1.5" height="1.5" fill="#0c0"/><rect x="6" y="9" width="1.5" height="1.5" fill="#00f"/><rect x="8.2" y="9" width="1.5" height="1.5" fill="#ee0"/><rect x="2" y="6" width="1" height="1" fill="#f00"/><rect x="2.5" y="7.2" width="2.5" height="0.9" fill="#f00"/><rect x="2" y="8.6" width="3" height="0.9" fill="#00f"/><rect x="2" y="10.2" width="3" height="0.9" fill="#000"/></svg>
<div class="t s5" style="left:22.5px;top:298px;line-height:17px">logonCount</div>
<div class="t s6" style="left:156.5px;top:298px;line-height:17px">Integer</div>
<div class="t s5" style="left:307px;top:298px;line-height:17px">1</div>
<div class="t s8" style="left:352px;top:298px;line-height:17px">126</div>
<svg class="ic" style="left:7px;top:314px" width="14" height="16" viewBox="0 0 14 16"><path d="M0.5 15.5V0.5h9l3 3v12z" fill="#fff" stroke="#8a8a8a"/><path d="M9 3.5h3.5v12H0" fill="none" stroke="#000" stroke-width="1.1"/><path d="M5 6h5l0.5 5.6h-5.5z" fill="#000"/><rect x="6" y="6.8" width="1.5" height="1.5" fill="#f00"/><rect x="8.2" y="6.8" width="1.5" height="1.5" fill="#0c0"/><rect x="6" y="9" width="1.5" height="1.5" fill="#00f"/><rect x="8.2" y="9" width="1.5" height="1.5" fill="#ee0"/><rect x="2" y="6" width="1" height="1" fill="#f00"/><rect x="2.5" y="7.2" width="2.5" height="0.9" fill="#f00"/><rect x="2" y="8.6" width="3" height="0.9" fill="#00f"/><rect x="2" y="10.2" width="3" height="0.9" fill="#000"/></svg>
<div class="t s5" style="left:22.5px;top:315px;line-height:17px">logonHours</div>
<div class="t s6" style="left:156.5px;top:315px;line-height:17px">OctetString</div>
<div class="t s5" style="left:307px;top:315px;line-height:17px">1</div>
<div class="t s8" style="left:352px;top:315px;line-height:17px">255 255 255 255 255 255 255 255 255 255 255</div>
<svg class="ic" style="left:7px;top:331px" width="14" height="16" viewBox="0 0 14 16"><path d="M0.5 15.5V0.5h9l3 3v12z" fill="#fff" stroke="#8a8a8a"/><path d="M9 3.5h3.5v12H0" fill="none" stroke="#000" stroke-width="1.1"/><path d="M5 6h5l0.5 5.6h-5.5z" fill="#000"/><rect x="6" y="6.8" width="1.5" height="1.5" fill="#f00"/><rect x="8.2" y="6.8" width="1.5" height="1.5" fill="#0c0"/><rect x="6" y="9" width="1.5" height="1.5" fill="#00f"/><rect x="8.2" y="9" width="1.5" height="1.5" fill="#ee0"/><rect x="2" y="6" width="1" height="1" fill="#f00"/><rect x="2.5" y="7.2" width="2.5" height="0.9" fill="#f00"/><rect x="2" y="8.6" width="3" height="0.9" fill="#00f"/><rect x="2" y="10.2" width="3" height="0.9" fill="#000"/></svg>
<div class="t s5" style="left:22.5px;top:332px;line-height:17px">memberOf</div>
<div class="t s6" style="left:156.5px;top:332px;line-height:17px">DN</div>
<div class="t s5" style="left:307px;top:332px;line-height:17px">5</div>
<div class="t s8" style="left:352px;top:332px;line-height:17px">CN=Group Policy Creator Owners,CN=Users,DC=sec,DC=com</div>
<svg class="ic" style="left:7px;top:348px" width="14" height="16" viewBox="0 0 14 16"><path d="M0.5 15.5V0.5h9l3 3v12z" fill="#fff" stroke="#8a8a8a"/><path d="M9 3.5h3.5v12H0" fill="none" stroke="#000" stroke-width="1.1"/><path d="M5 6h5l0.5 5.6h-5.5z" fill="#000"/><rect x="6" y="6.8" width="1.5" height="1.5" fill="#f00"/><rect x="8.2" y="6.8" width="1.5" height="1.5" fill="#0c0"/><rect x="6" y="9" width="1.5" height="1.5" fill="#00f"/><rect x="8.2" y="9" width="1.5" height="1.5" fill="#ee0"/><rect x="2" y="6" width="1" height="1" fill="#f00"/><rect x="2.5" y="7.2" width="2.5" height="0.9" fill="#f00"/><rect x="2" y="8.6" width="3" height="0.9" fill="#00f"/><rect x="2" y="10.2" width="3" height="0.9" fill="#000"/></svg>
<div class="t s5" style="left:22.5px;top:349px;line-height:17px">name</div>
<div class="t s6" style="left:156.5px;top:349px;line-height:17px">DirectoryString</div>
<div class="t s5" style="left:307px;top:349px;line-height:17px">1</div>
<div class="t s8" style="left:352px;top:349px;line-height:17px">Administrator</div>
<svg class="ic" style="left:7px;top:365px" width="14" height="16" viewBox="0 0 14 16"><path d="M0.5 15.5V0.5h9l3 3v12z" fill="#fff" stroke="#8a8a8a"/><path d="M9 3.5h3.5v12H0" fill="none" stroke="#000" stroke-width="1.1"/><path d="M5 6h5l0.5 5.6h-5.5z" fill="#000"/><rect x="6" y="6.8" width="1.5" height="1.5" fill="#f00"/><rect x="8.2" y="6.8" width="1.5" height="1.5" fill="#0c0"/><rect x="6" y="9" width="1.5" height="1.5" fill="#00f"/><rect x="8.2" y="9" width="1.5" height="1.5" fill="#ee0"/><rect x="2" y="6" width="1" height="1" fill="#f00"/><rect x="2.5" y="7.2" width="2.5" height="0.9" fill="#f00"/><rect x="2" y="8.6" width="3" height="0.9" fill="#00f"/><rect x="2" y="10.2" width="3" height="0.9" fill="#000"/></svg>
<div class="t s5" style="left:22.5px;top:366px;line-height:17px">nTSecurityDescriptor</div>
<div class="t s6" style="left:156.5px;top:366px;line-height:17px">NTSecurityDescriptor</div>
<div class="t s5" style="left:307px;top:366px;line-height:17px">1</div>
<div class="t s8" style="left:352px;top:366px;line-height:17px">D:PAI(OA;;RP;4c164200-20c0-11d0-a768-00aa006e0529</div>
<svg class="ic" style="left:7px;top:382px" width="14" height="16" viewBox="0 0 14 16"><path d="M0.5 15.5V0.5h9l3 3v12z" fill="#fff" stroke="#8a8a8a"/><path d="M9 3.5h3.5v12H0" fill="none" stroke="#000" stroke-width="1.1"/><path d="M5 6h5l0.5 5.6h-5.5z" fill="#000"/><rect x="6" y="6.8" width="1.5" height="1.5" fill="#f00"/><rect x="8.2" y="6.8" width="1.5" height="1.5" fill="#0c0"/><rect x="6" y="9" width="1.5" height="1.5" fill="#00f"/><rect x="8.2" y="9" width="1.5" height="1.5" fill="#ee0"/><rect x="2" y="6" width="1" height="1" fill="#f00"/><rect x="2.5" y="7.2" width="2.5" height="0.9" fill="#f00"/><rect x="2" y="8.6" width="3" height="0.9" fill="#00f"/><rect x="2" y="10.2" width="3" height="0.9" fill="#000"/></svg>
<div class="t s5" style="left:22.5px;top:383px;line-height:17px">objectCategory</div>
<div class="t s6" style="left:156.5px;top:383px;line-height:17px">DN</div>
<div class="t s5" style="left:307px;top:383px;line-height:17px">1</div>
<div class="t s8" style="left:352px;top:383px;line-height:17px">CN=Person,CN=Schema,CN=Configuration,DC=sec,DC=com</div>
<svg class="ic" style="left:7px;top:399px" width="14" height="16" viewBox="0 0 14 16"><path d="M0.5 15.5V0.5h9l3 3v12z" fill="#fff" stroke="#8a8a8a"/><path d="M9 3.5h3.5v12H0" fill="none" stroke="#000" stroke-width="1.1"/><path d="M5 6h5l0.5 5.6h-5.5z" fill="#000"/><rect x="6" y="6.8" width="1.5" height="1.5" fill="#f00"/><rect x="8.2" y="6.8" width="1.5" height="1.5" fill="#0c0"/><rect x="6" y="9" width="1.5" height="1.5" fill="#00f"/><rect x="8.2" y="9" width="1.5" height="1.5" fill="#ee0"/><rect x="2" y="6" width="1" height="1" fill="#f00"/><rect x="2.5" y="7.2" width="2.5" height="0.9" fill="#f00"/><rect x="2" y="8.6" width="3" height="0.9" fill="#00f"/><rect x="2" y="10.2" width="3" height="0.9" fill="#000"/></svg>
<div class="t s5" style="left:22.5px;top:400px;line-height:17px">objectClass</div>
<div class="t s6" style="left:156.5px;top:400px;line-height:17px">OID</div>
<div class="t s5" style="left:307px;top:400px;line-height:17px">4</div>
<div class="t s8" style="left:352px;top:400px;line-height:17px">top;person;organizationalPerson;user</div>
<svg class="ic" style="left:7px;top:416px" width="14" height="16" viewBox="0 0 14 16"><path d="M0.5 15.5V0.5h9l3 3v12z" fill="#fff" stroke="#8a8a8a"/><path d="M9 3.5h3.5v12H0" fill="none" stroke="#000" stroke-width="1.1"/><path d="M5 6h5l0.5 5.6h-5.5z" fill="#000"/><rect x="6" y="6.8" width="1.5" height="1.5" fill="#f00"/><rect x="8.2" y="6.8" width="1.5" height="1.5" fill="#0c0"/><rect x="6" y="9" width="1.5" height="1.5" fill="#00f"/><rect x="8.2" y="9" width="1.5" height="1.5" fill="#ee0"/><rect x="2" y="6" width="1" height="1" fill="#f00"/><rect x="2.5" y="7.2" width="2.5" height="0.9" fill="#f00"/><rect x="2" y="8.6" width="3" height="0.9" fill="#00f"/><rect x="2" y="10.2" width="3" height="0.9" fill="#000"/></svg>
<div class="t s5" style="left:22.5px;top:417px;line-height:17px">objectGUID</div>
<div class="t s6" style="left:156.5px;top:417px;line-height:17px">OctetString</div>
<div class="t s5" style="left:307px;top:417px;line-height:17px">1</div>
<div class="t s8" style="left:352px;top:417px;line-height:17px">{BE8F1CA2-21C2-4B46-95AD-708EC28F1234}</div>
<svg class="ic" style="left:7px;top:433px" width="14" height="16" viewBox="0 0 14 16"><path d="M0.5 15.5V0.5h9l3 3v12z" fill="#fff" stroke="#8a8a8a"/><path d="M9 3.5h3.5v12H0" fill="none" stroke="#000" stroke-width="1.1"/><path d="M5 6h5l0.5 5.6h-5.5z" fill="#000"/><rect x="6" y="6.8" width="1.5" height="1.5" fill="#f00"/><rect x="8.2" y="6.8" width="1.5" height="1.5" fill="#0c0"/><rect x="6" y="9" width="1.5" height="1.5" fill="#00f"/><rect x="8.2" y="9" width="1.5" height="1.5" fill="#ee0"/><rect x="2" y="6" width="1" height="1" fill="#f00"/><rect x="2.5" y="7.2" width="2.5" height="0.9" fill="#f00"/><rect x="2" y="8.6" width="3" height="0.9" fill="#00f"/><rect x="2" y="10.2" width="3" height="0.9" fill="#000"/></svg>
<div class="t s5" style="left:22.5px;top:434px;line-height:17px">objectSid</div>
<div class="t s6" style="left:156.5px;top:434px;line-height:17px">Sid</div>
<div class="t s5" style="left:307px;top:434px;line-height:17px">1</div>
<div class="t s8" style="left:352px;top:434px;line-height:17px">S-1-5-21-1027025209-3423359006-2631234567-500</div>
<svg class="ic" style="left:7px;top:450px" width="14" height="16" viewBox="0 0 14 16"><path d="M0.5 15.5V0.5h9l3 3v12z" fill="#fff" stroke="#8a8a8a"/><path d="M9 3.5h3.5v12H0" fill="none" stroke="#000" stroke-width="1.1"/><path d="M5 6h5l0.5 5.6h-5.5z" fill="#000"/><rect x="6" y="6.8" width="1.5" height="1.5" fill="#f00"/><rect x="8.2" y="6.8" width="1.5" height="1.5" fill="#0c0"/><rect x="6" y="9" width="1.5" height="1.5" fill="#00f"/><rect x="8.2" y="9" width="1.5" height="1.5" fill="#ee0"/><rect x="2" y="6" width="1" height="1" fill="#f00"/><rect x="2.5" y="7.2" width="2.5" height="0.9" fill="#f00"/><rect x="2" y="8.6" width="3" height="0.9" fill="#00f"/><rect x="2" y="10.2" width="3" height="0.9" fill="#000"/></svg>
<div class="t s5" style="left:22.5px;top:451px;line-height:17px">primaryGroupID</div>
<div class="t s6" style="left:156.5px;top:451px;line-height:17px">Integer</div>
<div class="t s5" style="left:307px;top:451px;line-height:17px">1</div>
<div class="t s8" style="left:352px;top:451px;line-height:17px">513</div>
<svg class="ic" style="left:7px;top:467px" width="14" height="16" viewBox="0 0 14 16"><path d="M0.5 15.5V0.5h9l3 3v12z" fill="#fff" stroke="#8a8a8a"/><path d="M9 3.5h3.5v12H0" fill="none" stroke="#000" stroke-width="1.1"/><path d="M5 6h5l0.5 5.6h-5.5z" fill="#000"/><rect x="6" y="6.8" width="1.5" height="1.5" fill="#f00"/><rect x="8.2" y="6.8" width="1.5" height="1.5" fill="#0c0"/><rect x="6" y="9" width="1.5" height="1.5" fill="#00f"/><rect x="8.2" y="9" width="1.5" height="1.5" fill="#ee0"/><rect x="2" y="6" width="1" height="1" fill="#f00"/><rect x="2.5" y="7.2" width="2.5" height="0.9" fill="#f00"/><rect x="2" y="8.6" width="3" height="0.9" fill="#00f"/><rect x="2" y="10.2" width="3" height="0.9" fill="#000"/></svg>
<div class="t s5" style="left:22.5px;top:468px;line-height:17px">pwdLastSet</div>
<div class="t s6" style="left:156.5px;top:468px;line-height:17px">Integer8</div>
<div class="t s5" style="left:307px;top:468px;line-height:17px">1</div>
<div class="t s8 dt" style="left:352px;top:468px;line-height:17px">2024/2/17 16:55:04</div>
<svg class="ic" style="left:7px;top:484px" width="14" height="16" viewBox="0 0 14 16"><path d="M0.5 15.5V0.5h9l3 3v12z" fill="#fff" stroke="#8a8a8a"/><path d="M9 3.5h3.5v12H0" fill="none" stroke="#000" stroke-width="1.1"/><path d="M5 6h5l0.5 5.6h-5.5z" fill="#000"/><rect x="6" y="6.8" width="1.5" height="1.5" fill="#f00"/><rect x="8.2" y="6.8" width="1.5" height="1.5" fill="#0c0"/><rect x="6" y="9" width="1.5" height="1.5" fill="#00f"/><rect x="8.2" y="9" width="1.5" height="1.5" fill="#ee0"/><rect x="2" y="6" width="1" height="1" fill="#f00"/><rect x="2.5" y="7.2" width="2.5" height="0.9" fill="#f00"/><rect x="2" y="8.6" width="3" height="0.9" fill="#00f"/><rect x="2" y="10.2" width="3" height="0.9" fill="#000"/></svg>
<div class="t s5" style="left:22.5px;top:485px;line-height:17px">sAMAccountName</div>
<div class="t s6" style="left:156.5px;top:485px;line-height:17px">DirectoryString</div>
<div class="t s5" style="left:307px;top:485px;line-height:17px">1</div>
<div class="t s8" style="left:352px;top:485px;line-height:17px">Administrator</div>
<svg class="ic" style="left:7px;top:501px" width="14" height="16" viewBox="0 0 14 16"><path d="M0.5 15.5V0.5h9l3 3v12z" fill="#fff" stroke="#8a8a8a"/><path d="M9 3.5h3.5v12H0" fill="none" stroke="#000" stroke-width="1.1"/><path d="M5 6h5l0.5 5.6h-5.5z" fill="#000"/><rect x="6" y="6.8" width="1.5" height="1.5" fill="#f00"/><rect x="8.2" y="6.8" width="1.5" height="1.5" fill="#0c0"/><rect x="6" y="9" width="1.5" height="1.5" fill="#00f"/><rect x="8.2" y="9" width="1.5" height="1.5" fill="#ee0"/><rect x="2" y="6" width="1" height="1" fill="#f00"/><rect x="2.5" y="7.2" width="2.5" height="0.9" fill="#f00"/><rect x="2" y="8.6" width="3" height="0.9" fill="#00f"/><rect x="2" y="10.2" width="3" height="0.9" fill="#000"/></svg>
<div class="t s5" style="left:22.5px;top:502px;line-height:17px">sAMAccountType</div>
<div class="t s6" style="left:156.5px;top:502px;line-height:17px">Integer</div>
<div class="t s5" style="left:307px;top:502px;line-height:17px">1</div>
<div class="t s8" style="left:352px;top:502px;line-height:17px">805306368</div>
<svg class="ic" style="left:7px;top:518px" width="14" height="16" viewBox="0 0 14 16"><path d="M0.5 15.5V0.5h9l3 3v12z" fill="#fff" stroke="#8a8a8a"/><path d="M9 3.5h3.5v12H0" fill="none" stroke="#000" stroke-width="1.1"/><path d="M5 6h5l0.5 5.6h-5.5z" fill="#000"/><rect x="6" y="6.8" width="1.5" height="1.5" fill="#f00"/><rect x="8.2" y="6.8" width="1.5" height="1.5" fill="#0c0"/><rect x="6" y="9" width="1.5" height="1.5" fill="#00f"/><rect x="8.2" y="9" width="1.5" height="1.5" fill="#ee0"/><rect x="2" y="6" width="1" height="1" fill="#f00"/><rect x="2.5" y="7.2" width="2.5" height="0.9" fill="#f00"/><rect x="2" y="8.6" width="3" height="0.9" fill="#00f"/><rect x="2" y="10.2" width="3" height="0.9" fill="#000"/></svg>
<div class="t s5" style="left:22.5px;top:519px;line-height:17px">servicePrincipalName</div>
<div class="t s6" style="left:156.5px;top:519px;line-height:17px">DirectoryString</div>
<div class="t s5" style="left:307px;top:519px;line-height:17px">1</div>
<div class="t s1" style="left:352px;top:519px;line-height:17px">cifs/DESKTOP-GBE538B.sec.com</div>
<svg class="ic" style="left:7px;top:535px" width="14" height="16" viewBox="0 0 14 16"><path d="M0.5 15.5V0.5h9l3 3v12z" fill="#fff" stroke="#8a8a8a"/><path d="M9 3.5h3.5v12H0" fill="none" stroke="#000" stroke-width="1.1"/><path d="M5 6h5l0.5 5.6h-5.5z" fill="#000"/><rect x="6" y="6.8" width="1.5" height="1.5" fill="#f00"/><rect x="8.2" y="6.8" width="1.5" height="1.5" fill="#0c0"/><rect x="6" y="9" width="1.5" height="1.5" fill="#00f"/><rect x="8.2" y="9" width="1.5" height="1.5" fill="#ee0"/><rect x="2" y="6" width="1" height="1" fill="#f00"/><rect x="2.5" y="7.2" width="2.5" height="0.9" fill="#f00"/><rect x="2" y="8.6" width="3" height="0.9" fill="#00f"/><rect x="2" y="10.2" width="3" height="0.9" fill="#000"/></svg>
<div class="t s5" style="left:22.5px;top:536px;line-height:17px">userAccountControl</div>
<div class="t s6" style="left:156.5px;top:536px;line-height:17px">Integer</div>
<div class="t s5" style="left:307px;top:536px;line-height:17px">1</div>
<div class="t s8" style="left:352px;top:536px;line-height:17px">66048</div>
<svg class="ic" style="left:7px;top:552px" width="14" height="16" viewBox="0 0 14 16"><path d="M0.5 15.5V0.5h9l3 3v12z" fill="#fff" stroke="#8a8a8a"/><path d="M9 3.5h3.5v12H0" fill="none" stroke="#000" stroke-width="1.1"/><path d="M5 6h5l0.5 5.6h-5.5z" fill="#000"/><rect x="6" y="6.8" width="1.5" height="1.5" fill="#f00"/><rect x="8.2" y="6.8" width="1.5" height="1.5" fill="#0c0"/><rect x="6" y="9" width="1.5" height="1.5" fill="#00f"/><rect x="8.2" y="9" width="1.5" height="1.5" fill="#ee0"/><rect x="2" y="6" width="1" height="1" fill="#f00"/><rect x="2.5" y="7.2" width="2.5" height="0.9" fill="#f00"/><rect x="2" y="8.6" width="3" height="0.9" fill="#00f"/><rect x="2" y="10.2" width="3" height="0.9" fill="#000"/></svg>
<div class="t s5" style="left:22.5px;top:553px;line-height:17px">userPrincipalName</div>
<div class="t s6" style="left:156.5px;top:553px;line-height:17px">DirectoryString</div>
<div class="t s5" style="left:307px;top:553px;line-height:17px">1</div>
<div class="t s1" style="left:352px;top:553px;line-height:17px">cifs/DESKTOP-GBE538B.sec.com@sec.com</div>
<svg class="ic" style="left:7px;top:569px" width="14" height="16" viewBox="0 0 14 16"><path d="M0.5 15.5V0.5h9l3 3v12z" fill="#fff" stroke="#8a8a8a"/><path d="M9 3.5h3.5v12H0" fill="none" stroke="#000" stroke-width="1.1"/><path d="M5 6h5l0.5 5.6h-5.5z" fill="#000"/><rect x="6" y="6.8" width="1.5" height="1.5" fill="#f00"/><rect x="8.2" y="6.8" width="1.5" height="1.5" fill="#0c0"/><rect x="6" y="9" width="1.5" height="1.5" fill="#00f"/><rect x="8.2" y="9" width="1.5" height="1.5" fill="#ee0"/><rect x="2" y="6" width="1" height="1" fill="#f00"/><rect x="2.5" y="7.2" width="2.5" height="0.9" fill="#f00"/><rect x="2" y="8.6" width="3" height="0.9" fill="#00f"/><rect x="2" y="10.2" width="3" height="0.9" fill="#000"/></svg>
<div class="t s5" style="left:22.5px;top:570px;line-height:17px">uSNChanged</div>
<div class="t s6" style="left:156.5px;top:570px;line-height:17px">Integer8</div>
<div class="t s5" style="left:307px;top:570px;line-height:17px">1</div>
<div class="t s8" style="left:352px;top:570px;line-height:17px">0x9035</div>
<svg class="ic" style="left:7px;top:586px" width="14" height="16" viewBox="0 0 14 16"><path d="M0.5 15.5V0.5h9l3 3v12z" fill="#fff" stroke="#8a8a8a"/><path d="M9 3.5h3.5v12H0" fill="none" stroke="#000" stroke-width="1.1"/><path d="M5 6h5l0.5 5.6h-5.5z" fill="#000"/><rect x="6" y="6.8" width="1.5" height="1.5" fill="#f00"/><rect x="8.2" y="6.8" width="1.5" height="1.5" fill="#0c0"/><rect x="6" y="9" width="1.5" height="1.5" fill="#00f"/><rect x="8.2" y="9" width="1.5" height="1.5" fill="#ee0"/><rect x="2" y="6" width="1" height="1" fill="#f00"/><rect x="2.5" y="7.2" width="2.5" height="0.9" fill="#f00"/><rect x="2" y="8.6" width="3" height="0.9" fill="#00f"/><rect x="2" y="10.2" width="3" height="0.9" fill="#000"/></svg>
<div class="t s5" style="left:22.5px;top:587px;line-height:17px">uSNCreated</div>
<div class="t s6" style="left:156.5px;top:587px;line-height:17px">Integer8</div>
<div class="t s5" style="left:307px;top:587px;line-height:17px">1</div>
<div class="t s8" style="left:352px;top:587px;line-height:17px">0x2004</div>
<svg class="ic" style="left:7px;top:603px" width="14" height="16" viewBox="0 0 14 16"><path d="M0.5 15.5V0.5h9l3 3v12z" fill="#fff" stroke="#8a8a8a"/><path d="M9 3.5h3.5v12H0" fill="none" stroke="#000" stroke-width="1.1"/><path d="M5 6h5l0.5 5.6h-5.5z" fill="#000"/><rect x="6" y="6.8" width="1.5" height="1.5" fill="#f00"/><rect x="8.2" y="6.8" width="1.5" height="1.5" fill="#0c0"/><rect x="6" y="9" width="1.5" height="1.5" fill="#00f"/><rect x="8.2" y="9" width="1.5" height="1.5" fill="#ee0"/><rect x="2" y="6" width="1" height="1" fill="#f00"/><rect x="2.5" y="7.2" width="2.5" height="0.9" fill="#f00"/><rect x="2" y="8.6" width="3" height="0.9" fill="#00f"/><rect x="2" y="10.2" width="3" height="0.9" fill="#000"/></svg>
<div class="t s5" style="left:22.5px;top:604px;line-height:17px">whenChanged</div>
<div class="t s6" style="left:156.5px;top:604px;line-height:17px">GeneralizedTime</div>
<div class="t s5" style="left:307px;top:604px;line-height:17px">1</div>
<div class="t s8 dt" style="left:352px;top:604px;line-height:17px">2024/2/17 16:55:04</div>
<svg class="ic" style="left:7px;top:620px" width="14" height="16" viewBox="0 0 14 16"><path d="M0.5 15.5V0.5h9l3 3v12z" fill="#fff" stroke="#8a8a8a"/><path d="M9 3.5h3.5v12H0" fill="none" stroke="#000" stroke-width="1.1"/><path d="M5 6h5l0.5 5.6h-5.5z" fill="#000"/><rect x="6" y="6.8" width="1.5" height="1.5" fill="#f00"/><rect x="8.2" y="6.8" width="1.5" height="1.5" fill="#0c0"/><rect x="6" y="9" width="1.5" height="1.5" fill="#00f"/><rect x="8.2" y="9" width="1.5" height="1.5" fill="#ee0"/><rect x="2" y="6" width="1" height="1" fill="#f00"/><rect x="2.5" y="7.2" width="2.5" height="0.9" fill="#f00"/><rect x="2" y="8.6" width="3" height="0.9" fill="#00f"/><rect x="2" y="10.2" width="3" height="0.9" fill="#000"/></svg>
<div class="t s5" style="left:22.5px;top:621px;line-height:17px">whenCreated</div>
<div class="t s6" style="left:156.5px;top:621px;line-height:17px">GeneralizedTime</div>
<div class="t s5" style="left:307px;top:621px;line-height:17px">1</div>
<div class="t s8 dt" style="left:352px;top:621px;line-height:17px">2024/2/6 0:29:02</div>
<div class="a" style="left:0px;top:650px;width:550px;height:16px;background:#f0f0f0"></div>
<div class="a" style="left:18px;top:650px;width:246px;height:16px;background:#cdcdcd"></div>
<svg class="a" style="left:6px;top:653px" width="7" height="10" viewBox="0 0 7 10"><path d="M5.5 1l-4 4l4 4" stroke="#606060" stroke-width="2.2" fill="none"/></svg>
<svg class="a" style="left:538px;top:653px" width="7" height="10" viewBox="0 0 7 10"><path d="M1.5 1l4 4l-4 4" stroke="#606060" stroke-width="2.2" fill="none"/></svg>
</div>
<div class="a" style="left:0;top:772px;width:821px;height:1px;background:#fff"></div>
<div class="t" style="left:-14px;top:776px;font-size:12.8px;line-height:18px">CN=Administrator,CN=Users,DC=sec,DC=com,127.0.0.1 [win2019-1.sec.com]</div>
<svg class="a" style="left:810px;top:783px" width="10" height="10" viewBox="0 0 10 10"><g fill="#a8a8a8"><rect x="7" y="1" width="2" height="2"/><rect x="4" y="4" width="2" height="2"/><rect x="7" y="4" width="2" height="2"/><rect x="1" y="7" width="2" height="2"/><rect x="4" y="7" width="2" height="2"/><rect x="7" y="7" width="2" height="2"/></g></svg>
</body></html>
